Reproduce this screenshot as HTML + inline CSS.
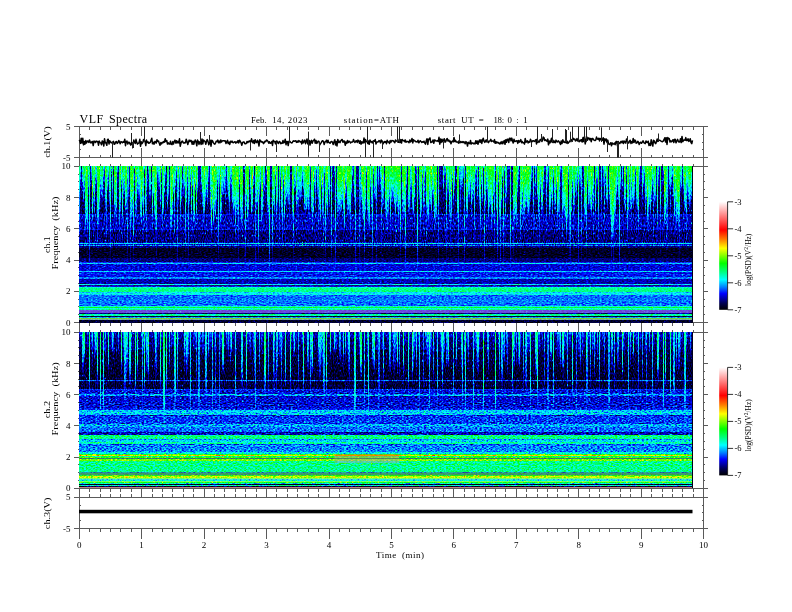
<!DOCTYPE html>
<html><head><meta charset="utf-8"><title>VLF Spectra</title>
<style>html,body{margin:0;padding:0;background:#fff;width:792px;height:612px;overflow:hidden;position:relative}
svg text{font-family:"Liberation Serif",serif}</style></head>
<body>
<svg width="792" height="612" viewBox="0 0 792 612" style="position:absolute;left:0;top:0"><defs><linearGradient id="cb" x1="0" y1="0" x2="0" y2="1"><stop offset="0.000" stop-color="#ffffff"/><stop offset="0.130" stop-color="#ff8080"/><stop offset="0.260" stop-color="#ff0000"/><stop offset="0.350" stop-color="#ff8000"/><stop offset="0.430" stop-color="#ffff00"/><stop offset="0.570" stop-color="#00ff00"/><stop offset="0.650" stop-color="#00ff80"/><stop offset="0.720" stop-color="#00ffff"/><stop offset="0.790" stop-color="#0080ff"/><stop offset="0.850" stop-color="#0000ff"/><stop offset="0.940" stop-color="#000050"/><stop offset="1.000" stop-color="#000000"/></linearGradient></defs><path d="M74.4 126.5L708.4 126.5M74.4 157.6L708.4 157.6M79.2 126.5L79.2 157.6M703.6 126.5L703.6 157.6M74.4 166.3L708.4 166.3M74.4 322.5L708.4 322.5M79.2 166.3L79.2 322.5M703.6 166.3L703.6 322.5M74.4 332.2L708.4 332.2M74.4 488.2L708.4 488.2M79.2 332.2L79.2 488.2M703.6 332.2L703.6 488.2M74.4 497.3L708.4 497.3M74.4 528.5L708.4 528.5M79.2 497.3L79.2 528.5M703.6 497.3L703.6 528.5M79.2 126.5L79.2 528.5M703.6 126.5L703.6 528.5M89.6 126.5L89.6 129.5M89.6 154.6L89.6 157.6M89.6 163.7L89.6 166.3M89.6 322.5L89.6 326M89.6 329.6L89.6 332.2M89.6 488.2L89.6 491.7M89.6 494.4L89.6 497.3M89.6 528.5L89.6 531.5M100 126.5L100 129.5M100 154.6L100 157.6M100 163.7L100 166.3M100 322.5L100 326M100 329.6L100 332.2M100 488.2L100 491.7M100 494.4L100 497.3M100 528.5L100 531.5M110.4 126.5L110.4 129.5M110.4 154.6L110.4 157.6M110.4 163.7L110.4 166.3M110.4 322.5L110.4 326M110.4 329.6L110.4 332.2M110.4 488.2L110.4 491.7M110.4 494.4L110.4 497.3M110.4 528.5L110.4 531.5M120.8 126.5L120.8 129.5M120.8 154.6L120.8 157.6M120.8 163.7L120.8 166.3M120.8 322.5L120.8 326M120.8 329.6L120.8 332.2M120.8 488.2L120.8 491.7M120.8 494.4L120.8 497.3M120.8 528.5L120.8 531.5M131.2 126.5L131.2 129.5M131.2 154.6L131.2 157.6M131.2 163.7L131.2 166.3M131.2 322.5L131.2 326M131.2 329.6L131.2 332.2M131.2 488.2L131.2 491.7M131.2 494.4L131.2 497.3M131.2 528.5L131.2 531.5M141.6 126.5L141.6 136M141.6 147.6L141.6 166.3M141.6 322.5L141.6 332.2M141.6 488.2L141.6 497.3M141.6 528.5L141.6 538.8M152 126.5L152 129.5M152 154.6L152 157.6M152 163.7L152 166.3M152 322.5L152 326M152 329.6L152 332.2M152 488.2L152 491.7M152 494.4L152 497.3M152 528.5L152 531.5M162.5 126.5L162.5 129.5M162.5 154.6L162.5 157.6M162.5 163.7L162.5 166.3M162.5 322.5L162.5 326M162.5 329.6L162.5 332.2M162.5 488.2L162.5 491.7M162.5 494.4L162.5 497.3M162.5 528.5L162.5 531.5M172.9 126.5L172.9 129.5M172.9 154.6L172.9 157.6M172.9 163.7L172.9 166.3M172.9 322.5L172.9 326M172.9 329.6L172.9 332.2M172.9 488.2L172.9 491.7M172.9 494.4L172.9 497.3M172.9 528.5L172.9 531.5M183.3 126.5L183.3 129.5M183.3 154.6L183.3 157.6M183.3 163.7L183.3 166.3M183.3 322.5L183.3 326M183.3 329.6L183.3 332.2M183.3 488.2L183.3 491.7M183.3 494.4L183.3 497.3M183.3 528.5L183.3 531.5M193.7 126.5L193.7 129.5M193.7 154.6L193.7 157.6M193.7 163.7L193.7 166.3M193.7 322.5L193.7 326M193.7 329.6L193.7 332.2M193.7 488.2L193.7 491.7M193.7 494.4L193.7 497.3M193.7 528.5L193.7 531.5M204.1 126.5L204.1 136M204.1 147.6L204.1 166.3M204.1 322.5L204.1 332.2M204.1 488.2L204.1 497.3M204.1 528.5L204.1 538.8M214.5 126.5L214.5 129.5M214.5 154.6L214.5 157.6M214.5 163.7L214.5 166.3M214.5 322.5L214.5 326M214.5 329.6L214.5 332.2M214.5 488.2L214.5 491.7M214.5 494.4L214.5 497.3M214.5 528.5L214.5 531.5M224.9 126.5L224.9 129.5M224.9 154.6L224.9 157.6M224.9 163.7L224.9 166.3M224.9 322.5L224.9 326M224.9 329.6L224.9 332.2M224.9 488.2L224.9 491.7M224.9 494.4L224.9 497.3M224.9 528.5L224.9 531.5M235.3 126.5L235.3 129.5M235.3 154.6L235.3 157.6M235.3 163.7L235.3 166.3M235.3 322.5L235.3 326M235.3 329.6L235.3 332.2M235.3 488.2L235.3 491.7M235.3 494.4L235.3 497.3M235.3 528.5L235.3 531.5M245.7 126.5L245.7 129.5M245.7 154.6L245.7 157.6M245.7 163.7L245.7 166.3M245.7 322.5L245.7 326M245.7 329.6L245.7 332.2M245.7 488.2L245.7 491.7M245.7 494.4L245.7 497.3M245.7 528.5L245.7 531.5M256.1 126.5L256.1 129.5M256.1 154.6L256.1 157.6M256.1 163.7L256.1 166.3M256.1 322.5L256.1 326M256.1 329.6L256.1 332.2M256.1 488.2L256.1 491.7M256.1 494.4L256.1 497.3M256.1 528.5L256.1 531.5M266.5 126.5L266.5 136M266.5 147.6L266.5 166.3M266.5 322.5L266.5 332.2M266.5 488.2L266.5 497.3M266.5 528.5L266.5 538.8M276.9 126.5L276.9 129.5M276.9 154.6L276.9 157.6M276.9 163.7L276.9 166.3M276.9 322.5L276.9 326M276.9 329.6L276.9 332.2M276.9 488.2L276.9 491.7M276.9 494.4L276.9 497.3M276.9 528.5L276.9 531.5M287.3 126.5L287.3 129.5M287.3 154.6L287.3 157.6M287.3 163.7L287.3 166.3M287.3 322.5L287.3 326M287.3 329.6L287.3 332.2M287.3 488.2L287.3 491.7M287.3 494.4L287.3 497.3M287.3 528.5L287.3 531.5M297.7 126.5L297.7 129.5M297.7 154.6L297.7 157.6M297.7 163.7L297.7 166.3M297.7 322.5L297.7 326M297.7 329.6L297.7 332.2M297.7 488.2L297.7 491.7M297.7 494.4L297.7 497.3M297.7 528.5L297.7 531.5M308.1 126.5L308.1 129.5M308.1 154.6L308.1 157.6M308.1 163.7L308.1 166.3M308.1 322.5L308.1 326M308.1 329.6L308.1 332.2M308.1 488.2L308.1 491.7M308.1 494.4L308.1 497.3M308.1 528.5L308.1 531.5M318.6 126.5L318.6 129.5M318.6 154.6L318.6 157.6M318.6 163.7L318.6 166.3M318.6 322.5L318.6 326M318.6 329.6L318.6 332.2M318.6 488.2L318.6 491.7M318.6 494.4L318.6 497.3M318.6 528.5L318.6 531.5M329 126.5L329 136M329 147.6L329 166.3M329 322.5L329 332.2M329 488.2L329 497.3M329 528.5L329 538.8M339.4 126.5L339.4 129.5M339.4 154.6L339.4 157.6M339.4 163.7L339.4 166.3M339.4 322.5L339.4 326M339.4 329.6L339.4 332.2M339.4 488.2L339.4 491.7M339.4 494.4L339.4 497.3M339.4 528.5L339.4 531.5M349.8 126.5L349.8 129.5M349.8 154.6L349.8 157.6M349.8 163.7L349.8 166.3M349.8 322.5L349.8 326M349.8 329.6L349.8 332.2M349.8 488.2L349.8 491.7M349.8 494.4L349.8 497.3M349.8 528.5L349.8 531.5M360.2 126.5L360.2 129.5M360.2 154.6L360.2 157.6M360.2 163.7L360.2 166.3M360.2 322.5L360.2 326M360.2 329.6L360.2 332.2M360.2 488.2L360.2 491.7M360.2 494.4L360.2 497.3M360.2 528.5L360.2 531.5M370.6 126.5L370.6 129.5M370.6 154.6L370.6 157.6M370.6 163.7L370.6 166.3M370.6 322.5L370.6 326M370.6 329.6L370.6 332.2M370.6 488.2L370.6 491.7M370.6 494.4L370.6 497.3M370.6 528.5L370.6 531.5M381 126.5L381 129.5M381 154.6L381 157.6M381 163.7L381 166.3M381 322.5L381 326M381 329.6L381 332.2M381 488.2L381 491.7M381 494.4L381 497.3M381 528.5L381 531.5M391.4 126.5L391.4 136M391.4 147.6L391.4 166.3M391.4 322.5L391.4 332.2M391.4 488.2L391.4 497.3M391.4 528.5L391.4 538.8M401.8 126.5L401.8 129.5M401.8 154.6L401.8 157.6M401.8 163.7L401.8 166.3M401.8 322.5L401.8 326M401.8 329.6L401.8 332.2M401.8 488.2L401.8 491.7M401.8 494.4L401.8 497.3M401.8 528.5L401.8 531.5M412.2 126.5L412.2 129.5M412.2 154.6L412.2 157.6M412.2 163.7L412.2 166.3M412.2 322.5L412.2 326M412.2 329.6L412.2 332.2M412.2 488.2L412.2 491.7M412.2 494.4L412.2 497.3M412.2 528.5L412.2 531.5M422.6 126.5L422.6 129.5M422.6 154.6L422.6 157.6M422.6 163.7L422.6 166.3M422.6 322.5L422.6 326M422.6 329.6L422.6 332.2M422.6 488.2L422.6 491.7M422.6 494.4L422.6 497.3M422.6 528.5L422.6 531.5M433 126.5L433 129.5M433 154.6L433 157.6M433 163.7L433 166.3M433 322.5L433 326M433 329.6L433 332.2M433 488.2L433 491.7M433 494.4L433 497.3M433 528.5L433 531.5M443.4 126.5L443.4 129.5M443.4 154.6L443.4 157.6M443.4 163.7L443.4 166.3M443.4 322.5L443.4 326M443.4 329.6L443.4 332.2M443.4 488.2L443.4 491.7M443.4 494.4L443.4 497.3M443.4 528.5L443.4 531.5M453.8 126.5L453.8 136M453.8 147.6L453.8 166.3M453.8 322.5L453.8 332.2M453.8 488.2L453.8 497.3M453.8 528.5L453.8 538.8M464.2 126.5L464.2 129.5M464.2 154.6L464.2 157.6M464.2 163.7L464.2 166.3M464.2 322.5L464.2 326M464.2 329.6L464.2 332.2M464.2 488.2L464.2 491.7M464.2 494.4L464.2 497.3M464.2 528.5L464.2 531.5M474.7 126.5L474.7 129.5M474.7 154.6L474.7 157.6M474.7 163.7L474.7 166.3M474.7 322.5L474.7 326M474.7 329.6L474.7 332.2M474.7 488.2L474.7 491.7M474.7 494.4L474.7 497.3M474.7 528.5L474.7 531.5M485.1 126.5L485.1 129.5M485.1 154.6L485.1 157.6M485.1 163.7L485.1 166.3M485.1 322.5L485.1 326M485.1 329.6L485.1 332.2M485.1 488.2L485.1 491.7M485.1 494.4L485.1 497.3M485.1 528.5L485.1 531.5M495.5 126.5L495.5 129.5M495.5 154.6L495.5 157.6M495.5 163.7L495.5 166.3M495.5 322.5L495.5 326M495.5 329.6L495.5 332.2M495.5 488.2L495.5 491.7M495.5 494.4L495.5 497.3M495.5 528.5L495.5 531.5M505.9 126.5L505.9 129.5M505.9 154.6L505.9 157.6M505.9 163.7L505.9 166.3M505.9 322.5L505.9 326M505.9 329.6L505.9 332.2M505.9 488.2L505.9 491.7M505.9 494.4L505.9 497.3M505.9 528.5L505.9 531.5M516.3 126.5L516.3 136M516.3 147.6L516.3 166.3M516.3 322.5L516.3 332.2M516.3 488.2L516.3 497.3M516.3 528.5L516.3 538.8M526.7 126.5L526.7 129.5M526.7 154.6L526.7 157.6M526.7 163.7L526.7 166.3M526.7 322.5L526.7 326M526.7 329.6L526.7 332.2M526.7 488.2L526.7 491.7M526.7 494.4L526.7 497.3M526.7 528.5L526.7 531.5M537.1 126.5L537.1 129.5M537.1 154.6L537.1 157.6M537.1 163.7L537.1 166.3M537.1 322.5L537.1 326M537.1 329.6L537.1 332.2M537.1 488.2L537.1 491.7M537.1 494.4L537.1 497.3M537.1 528.5L537.1 531.5M547.5 126.5L547.5 129.5M547.5 154.6L547.5 157.6M547.5 163.7L547.5 166.3M547.5 322.5L547.5 326M547.5 329.6L547.5 332.2M547.5 488.2L547.5 491.7M547.5 494.4L547.5 497.3M547.5 528.5L547.5 531.5M557.9 126.5L557.9 129.5M557.9 154.6L557.9 157.6M557.9 163.7L557.9 166.3M557.9 322.5L557.9 326M557.9 329.6L557.9 332.2M557.9 488.2L557.9 491.7M557.9 494.4L557.9 497.3M557.9 528.5L557.9 531.5M568.3 126.5L568.3 129.5M568.3 154.6L568.3 157.6M568.3 163.7L568.3 166.3M568.3 322.5L568.3 326M568.3 329.6L568.3 332.2M568.3 488.2L568.3 491.7M568.3 494.4L568.3 497.3M568.3 528.5L568.3 531.5M578.7 126.5L578.7 136M578.7 147.6L578.7 166.3M578.7 322.5L578.7 332.2M578.7 488.2L578.7 497.3M578.7 528.5L578.7 538.8M589.1 126.5L589.1 129.5M589.1 154.6L589.1 157.6M589.1 163.7L589.1 166.3M589.1 322.5L589.1 326M589.1 329.6L589.1 332.2M589.1 488.2L589.1 491.7M589.1 494.4L589.1 497.3M589.1 528.5L589.1 531.5M599.5 126.5L599.5 129.5M599.5 154.6L599.5 157.6M599.5 163.7L599.5 166.3M599.5 322.5L599.5 326M599.5 329.6L599.5 332.2M599.5 488.2L599.5 491.7M599.5 494.4L599.5 497.3M599.5 528.5L599.5 531.5M609.9 126.5L609.9 129.5M609.9 154.6L609.9 157.6M609.9 163.7L609.9 166.3M609.9 322.5L609.9 326M609.9 329.6L609.9 332.2M609.9 488.2L609.9 491.7M609.9 494.4L609.9 497.3M609.9 528.5L609.9 531.5M620.3 126.5L620.3 129.5M620.3 154.6L620.3 157.6M620.3 163.7L620.3 166.3M620.3 322.5L620.3 326M620.3 329.6L620.3 332.2M620.3 488.2L620.3 491.7M620.3 494.4L620.3 497.3M620.3 528.5L620.3 531.5M630.8 126.5L630.8 129.5M630.8 154.6L630.8 157.6M630.8 163.7L630.8 166.3M630.8 322.5L630.8 326M630.8 329.6L630.8 332.2M630.8 488.2L630.8 491.7M630.8 494.4L630.8 497.3M630.8 528.5L630.8 531.5M641.2 126.5L641.2 136M641.2 147.6L641.2 166.3M641.2 322.5L641.2 332.2M641.2 488.2L641.2 497.3M641.2 528.5L641.2 538.8M651.6 126.5L651.6 129.5M651.6 154.6L651.6 157.6M651.6 163.7L651.6 166.3M651.6 322.5L651.6 326M651.6 329.6L651.6 332.2M651.6 488.2L651.6 491.7M651.6 494.4L651.6 497.3M651.6 528.5L651.6 531.5M662 126.5L662 129.5M662 154.6L662 157.6M662 163.7L662 166.3M662 322.5L662 326M662 329.6L662 332.2M662 488.2L662 491.7M662 494.4L662 497.3M662 528.5L662 531.5M672.4 126.5L672.4 129.5M672.4 154.6L672.4 157.6M672.4 163.7L672.4 166.3M672.4 322.5L672.4 326M672.4 329.6L672.4 332.2M672.4 488.2L672.4 491.7M672.4 494.4L672.4 497.3M672.4 528.5L672.4 531.5M682.8 126.5L682.8 129.5M682.8 154.6L682.8 157.6M682.8 163.7L682.8 166.3M682.8 322.5L682.8 326M682.8 329.6L682.8 332.2M682.8 488.2L682.8 491.7M682.8 494.4L682.8 497.3M682.8 528.5L682.8 531.5M693.2 126.5L693.2 129.5M693.2 154.6L693.2 157.6M693.2 163.7L693.2 166.3M693.2 322.5L693.2 326M693.2 329.6L693.2 332.2M693.2 488.2L693.2 491.7M693.2 494.4L693.2 497.3M693.2 528.5L693.2 531.5M79.2 528.5L79.2 538.8M703.6 528.5L703.6 538.8M79.2 134.3L81.2 134.3M701.6 134.3L703.6 134.3M79.2 142.1L81.2 142.1M701.6 142.1L703.6 142.1M79.2 149.8L81.2 149.8M701.6 149.8L703.6 149.8M79.2 505.1L81.2 505.1M701.6 505.1L703.6 505.1M79.2 512.9L81.2 512.9M701.6 512.9L703.6 512.9M79.2 520.7L81.2 520.7M701.6 520.7L703.6 520.7M78.2 174.1L79.2 174.1M703.6 174.1L705.2 174.1M78.2 181.9L79.2 181.9M703.6 181.9L705.2 181.9M78.2 189.7L79.2 189.7M703.6 189.7L705.2 189.7M74.4 197.5L79.2 197.5M703.6 197.5L708.4 197.5M78.2 205.4L79.2 205.4M703.6 205.4L705.2 205.4M78.2 213.2L79.2 213.2M703.6 213.2L705.2 213.2M78.2 221L79.2 221M703.6 221L705.2 221M74.4 228.8L79.2 228.8M703.6 228.8L708.4 228.8M78.2 236.6L79.2 236.6M703.6 236.6L705.2 236.6M78.2 244.4L79.2 244.4M703.6 244.4L705.2 244.4M78.2 252.2L79.2 252.2M703.6 252.2L705.2 252.2M74.4 260L79.2 260M703.6 260L708.4 260M78.2 267.8L79.2 267.8M703.6 267.8L705.2 267.8M78.2 275.6L79.2 275.6M703.6 275.6L705.2 275.6M78.2 283.5L79.2 283.5M703.6 283.5L705.2 283.5M74.4 291.3L79.2 291.3M703.6 291.3L708.4 291.3M78.2 299.1L79.2 299.1M703.6 299.1L705.2 299.1M78.2 306.9L79.2 306.9M703.6 306.9L705.2 306.9M78.2 314.7L79.2 314.7M703.6 314.7L705.2 314.7M78.2 340L79.2 340M703.6 340L705.2 340M78.2 347.8L79.2 347.8M703.6 347.8L705.2 347.8M78.2 355.6L79.2 355.6M703.6 355.6L705.2 355.6M74.4 363.4L79.2 363.4M703.6 363.4L708.4 363.4M78.2 371.2L79.2 371.2M703.6 371.2L705.2 371.2M78.2 379L79.2 379M703.6 379L705.2 379M78.2 386.8L79.2 386.8M703.6 386.8L705.2 386.8M74.4 394.6L79.2 394.6M703.6 394.6L708.4 394.6M78.2 402.4L79.2 402.4M703.6 402.4L705.2 402.4M78.2 410.2L79.2 410.2M703.6 410.2L705.2 410.2M78.2 418L79.2 418M703.6 418L705.2 418M74.4 425.8L79.2 425.8M703.6 425.8L708.4 425.8M78.2 433.6L79.2 433.6M703.6 433.6L705.2 433.6M78.2 441.4L79.2 441.4M703.6 441.4L705.2 441.4M78.2 449.2L79.2 449.2M703.6 449.2L705.2 449.2M74.4 457L79.2 457M703.6 457L708.4 457M78.2 464.8L79.2 464.8M703.6 464.8L705.2 464.8M78.2 472.6L79.2 472.6M703.6 472.6L705.2 472.6M78.2 480.4L79.2 480.4M703.6 480.4L705.2 480.4" stroke="#5a5a5a" stroke-width="1" fill="none" shape-rendering="crispEdges"/><defs><filter id="cmA" x="0" y="0" width="1" height="1" color-interpolation-filters="sRGB"><feTurbulence type="fractalNoise" baseFrequency="0.9 0.4" numOctaves="1" seed="3" result="t"/><feColorMatrix in="t" values="1 0 0 0 0 1 0 0 0 0 1 0 0 0 0 0 0 0 0 1" result="g"/><feComposite in="SourceGraphic" in2="g" operator="arithmetic" k1="0" k2="1" k3="0.35" k4="-0.1750" result="s"/><feTurbulence type="fractalNoise" baseFrequency="0.8 0.4" numOctaves="1" seed="53" result="t2"/><feColorMatrix in="t2" values="10 0 0 0 -6.60 10 0 0 0 -6.60 10 0 0 0 -6.60 0 0 0 0 1" result="g2"/><feComposite in="s" in2="g2" operator="arithmetic" k1="0" k2="1" k3="0.13" k4="0" result="s2"/><feComponentTransfer in="s2"><feFuncR type="table" tableValues="0 0 0 0 0 0 0 0 0 0 0 0 0 0 0 0 0 0 0 0 0 0 0 0 0 0 0 0 0.103 0.217 0.33 0.443 0.557 0.67 0.783 0.897 1 1 1 1 1 1 1 1 1 1 1 1 1 1 1 1 1 1 1 1 1 1 1 1 1 1 1 1"/><feFuncG type="table" tableValues="0 0 0 0 0 0 0 0 0 0 0.073 0.206 0.339 0.471 0.589 0.702 0.815 0.928 1 1 1 1 1 1 1 1 1 1 1 1 1 1 1 1 1 1 0.991 0.892 0.793 0.695 0.596 0.498 0.409 0.32 0.232 0.143 0.0549 0.0233 0.0846 0.146 0.207 0.268 0.33 0.391 0.452 0.514 0.574 0.635 0.696 0.757 0.818 0.878 0.939 1"/><feFuncB type="table" tableValues="0 0.083 0.166 0.249 0.34 0.461 0.582 0.703 0.824 0.946 1 1 1 1 1 1 1 1 0.959 0.846 0.733 0.621 0.508 0.407 0.308 0.208 0.109 0.00896 0 0 0 0 0 0 0 0 0 0 0 0 0 0 0 0 0 0 0 0.0233 0.0846 0.146 0.207 0.268 0.33 0.391 0.452 0.514 0.574 0.635 0.696 0.757 0.818 0.878 0.939 1"/><feFuncA type="identity"/></feComponentTransfer><feGaussianBlur stdDeviation="0.4"/></filter><filter id="cmA2" x="0" y="0" width="1" height="1" color-interpolation-filters="sRGB"><feTurbulence type="fractalNoise" baseFrequency="0.45 0.9" numOctaves="1" seed="4" result="t"/><feColorMatrix in="t" values="1 0 0 0 0 1 0 0 0 0 1 0 0 0 0 0 0 0 0 1" result="g"/><feComposite in="SourceGraphic" in2="g" operator="arithmetic" k1="0" k2="1" k3="0.24" k4="-0.1200" result="s"/><feTurbulence type="fractalNoise" baseFrequency="0.5 0.9" numOctaves="1" seed="54" result="t2"/><feColorMatrix in="t2" values="10 0 0 0 -6.60 10 0 0 0 -6.60 10 0 0 0 -6.60 0 0 0 0 1" result="g2"/><feComposite in="s" in2="g2" operator="arithmetic" k1="0" k2="1" k3="0.07" k4="0" result="s2"/><feComponentTransfer in="s2"><feFuncR type="table" tableValues="0 0 0 0 0 0 0 0 0 0 0 0 0 0 0 0 0 0 0 0 0 0 0 0 0 0 0 0 0.103 0.217 0.33 0.443 0.557 0.67 0.783 0.897 1 1 1 1 1 1 1 1 1 1 1 1 1 1 1 1 1 1 1 1 1 1 1 1 1 1 1 1"/><feFuncG type="table" tableValues="0 0 0 0 0 0 0 0 0 0 0.073 0.206 0.339 0.471 0.589 0.702 0.815 0.928 1 1 1 1 1 1 1 1 1 1 1 1 1 1 1 1 1 1 0.991 0.892 0.793 0.695 0.596 0.498 0.409 0.32 0.232 0.143 0.0549 0.0233 0.0846 0.146 0.207 0.268 0.33 0.391 0.452 0.514 0.574 0.635 0.696 0.757 0.818 0.878 0.939 1"/><feFuncB type="table" tableValues="0 0.083 0.166 0.249 0.34 0.461 0.582 0.703 0.824 0.946 1 1 1 1 1 1 1 1 0.959 0.846 0.733 0.621 0.508 0.407 0.308 0.208 0.109 0.00896 0 0 0 0 0 0 0 0 0 0 0 0 0 0 0 0 0 0 0 0.0233 0.0846 0.146 0.207 0.268 0.33 0.391 0.452 0.514 0.574 0.635 0.696 0.757 0.818 0.878 0.939 1"/><feFuncA type="identity"/></feComponentTransfer><feGaussianBlur stdDeviation="0.4"/></filter><filter id="cmB" x="0" y="0" width="1" height="1" color-interpolation-filters="sRGB"><feTurbulence type="fractalNoise" baseFrequency="0.9 0.4" numOctaves="1" seed="8" result="t"/><feColorMatrix in="t" values="1 0 0 0 0 1 0 0 0 0 1 0 0 0 0 0 0 0 0 1" result="g"/><feComposite in="SourceGraphic" in2="g" operator="arithmetic" k1="0" k2="1" k3="0.3" k4="-0.1500" result="s"/><feTurbulence type="fractalNoise" baseFrequency="0.8 0.4" numOctaves="1" seed="58" result="t2"/><feColorMatrix in="t2" values="10 0 0 0 -6.60 10 0 0 0 -6.60 10 0 0 0 -6.60 0 0 0 0 1" result="g2"/><feComposite in="s" in2="g2" operator="arithmetic" k1="0" k2="1" k3="0.13" k4="0" result="s2"/><feComponentTransfer in="s2"><feFuncR type="table" tableValues="0 0 0 0 0 0 0 0 0 0 0 0 0 0 0 0 0 0 0 0 0 0 0 0 0 0 0 0 0.103 0.217 0.33 0.443 0.557 0.67 0.783 0.897 1 1 1 1 1 1 1 1 1 1 1 1 1 1 1 1 1 1 1 1 1 1 1 1 1 1 1 1"/><feFuncG type="table" tableValues="0 0 0 0 0 0 0 0 0 0 0.073 0.206 0.339 0.471 0.589 0.702 0.815 0.928 1 1 1 1 1 1 1 1 1 1 1 1 1 1 1 1 1 1 0.991 0.892 0.793 0.695 0.596 0.498 0.409 0.32 0.232 0.143 0.0549 0.0233 0.0846 0.146 0.207 0.268 0.33 0.391 0.452 0.514 0.574 0.635 0.696 0.757 0.818 0.878 0.939 1"/><feFuncB type="table" tableValues="0 0.083 0.166 0.249 0.34 0.461 0.582 0.703 0.824 0.946 1 1 1 1 1 1 1 1 0.959 0.846 0.733 0.621 0.508 0.407 0.308 0.208 0.109 0.00896 0 0 0 0 0 0 0 0 0 0 0 0 0 0 0 0 0 0 0 0.0233 0.0846 0.146 0.207 0.268 0.33 0.391 0.452 0.514 0.574 0.635 0.696 0.757 0.818 0.878 0.939 1"/><feFuncA type="identity"/></feComponentTransfer><feGaussianBlur stdDeviation="0.4"/></filter><filter id="cmB2" x="0" y="0" width="1" height="1" color-interpolation-filters="sRGB"><feTurbulence type="fractalNoise" baseFrequency="0.45 0.9" numOctaves="1" seed="9" result="t"/><feColorMatrix in="t" values="1 0 0 0 0 1 0 0 0 0 1 0 0 0 0 0 0 0 0 1" result="g"/><feComposite in="SourceGraphic" in2="g" operator="arithmetic" k1="0" k2="1" k3="0.38" k4="-0.1900" result="s"/><feTurbulence type="fractalNoise" baseFrequency="0.5 0.9" numOctaves="1" seed="59" result="t2"/><feColorMatrix in="t2" values="10 0 0 0 -6.60 10 0 0 0 -6.60 10 0 0 0 -6.60 0 0 0 0 1" result="g2"/><feComposite in="s" in2="g2" operator="arithmetic" k1="0" k2="1" k3="0.1" k4="0" result="s2"/><feComponentTransfer in="s2"><feFuncR type="table" tableValues="0 0 0 0 0 0 0 0 0 0 0 0 0 0 0 0 0 0 0 0 0 0 0 0 0 0 0 0 0.103 0.217 0.33 0.443 0.557 0.67 0.783 0.897 1 1 1 1 1 1 1 1 1 1 1 1 1 1 1 1 1 1 1 1 1 1 1 1 1 1 1 1"/><feFuncG type="table" tableValues="0 0 0 0 0 0 0 0 0 0 0.073 0.206 0.339 0.471 0.589 0.702 0.815 0.928 1 1 1 1 1 1 1 1 1 1 1 1 1 1 1 1 1 1 0.991 0.892 0.793 0.695 0.596 0.498 0.409 0.32 0.232 0.143 0.0549 0.0233 0.0846 0.146 0.207 0.268 0.33 0.391 0.452 0.514 0.574 0.635 0.696 0.757 0.818 0.878 0.939 1"/><feFuncB type="table" tableValues="0 0.083 0.166 0.249 0.34 0.461 0.582 0.703 0.824 0.946 1 1 1 1 1 1 1 1 0.959 0.846 0.733 0.621 0.508 0.407 0.308 0.208 0.109 0.00896 0 0 0 0 0 0 0 0 0 0 0 0 0 0 0 0 0 0 0 0.0233 0.0846 0.146 0.207 0.268 0.33 0.391 0.452 0.514 0.574 0.635 0.696 0.757 0.818 0.878 0.939 1"/><feFuncA type="identity"/></feComponentTransfer><feGaussianBlur stdDeviation="0.4"/></filter><clipPath id="c1"><rect x="79.0" y="166" width="614" height="157"/></clipPath><clipPath id="c1u"><rect x="79.0" y="166" width="614" height="80"/></clipPath><clipPath id="c1l"><rect x="79.0" y="246" width="614" height="77"/></clipPath><clipPath id="c2"><rect x="79.0" y="332" width="614" height="156"/></clipPath><clipPath id="c2u"><rect x="79.0" y="332" width="614" height="58"/></clipPath><clipPath id="c2l"><rect x="79.0" y="390" width="614" height="98"/></clipPath><linearGradient id="k1" gradientUnits="userSpaceOnUse" x1="0" y1="-40" x2="0" y2="0"><stop offset="0" stop-color="#707070"/><stop offset="0.8" stop-color="#303030"/><stop offset="1" stop-color="#1a1a1a" stop-opacity="0"/></linearGradient><rect id="q1" x="0" y="-200" width="1" height="200" fill="url(#k1)"/><linearGradient id="k2" gradientUnits="userSpaceOnUse" x1="0" y1="-36" x2="0" y2="0"><stop offset="0" stop-color="#444"/><stop offset="0.8" stop-color="#1e1e1e"/><stop offset="1" stop-color="#0e0e0e" stop-opacity="0"/></linearGradient><rect id="q2" x="0" y="-200" width="1" height="200" fill="url(#k2)"/><linearGradient id="ks" x1="0" y1="0" x2="0" y2="1"><stop offset="0" stop-color="#646464"/><stop offset="0.5" stop-color="#4a4a4a"/><stop offset="1" stop-color="#333" stop-opacity="0"/></linearGradient><linearGradient id="ks2" x1="0" y1="0" x2="0" y2="1"><stop offset="0" stop-color="#5e5e5e"/><stop offset="0.6" stop-color="#4a4a4a"/><stop offset="1" stop-color="#333" stop-opacity="0"/></linearGradient></defs><g clip-path="url(#c1u)"><g filter="url(#cmA)"><rect x="77.0" y="160" width="617.5" height="26" fill="#1a1a1a"/><rect x="77.0" y="186" width="617.5" height="14" fill="#131313"/><rect x="77.0" y="200" width="617.5" height="14" fill="#0f0f0f"/><rect x="77.0" y="214" width="617.5" height="1" fill="#262626"/><rect x="77.0" y="215" width="617.5" height="14" fill="#1d1d1d"/><rect x="77.0" y="229" width="617.5" height="1.5" fill="#262626"/><rect x="77.0" y="230.5" width="617.5" height="11.5" fill="#131313"/><rect x="77.0" y="242" width="617.5" height="1" fill="#1c1c1c"/><rect x="77.0" y="243" width="617.5" height="1" fill="#424242"/><rect x="77.0" y="244" width="617.5" height="1" fill="#1f1f1f"/><rect x="77.0" y="245" width="617.5" height="1" fill="#333333"/><rect x="77.0" y="246" width="617.5" height="2" fill="#141414"/><use href="#q1" x="79" y="191.4"/><use href="#q1" x="80" y="189.6"/><use href="#q1" x="81" y="170.5"/><use href="#q1" x="82" y="187.4"/><use href="#q1" x="83" y="205.2"/><use href="#q1" x="84" y="199"/><use href="#q1" x="85" y="200.7"/><use href="#q1" x="86" y="228.4"/><use href="#q1" x="87" y="235.2"/><use href="#q1" x="88" y="194"/><use href="#q1" x="89" y="192.1"/><use href="#q1" x="90" y="166"/><use href="#q1" x="91" y="183.7"/><use href="#q1" x="92" y="230.4"/><use href="#q1" x="93" y="196"/><use href="#q1" x="94" y="216.9"/><use href="#q1" x="95" y="189.9"/><use href="#q1" x="96" y="189.2"/><use href="#q1" x="97" y="217.3"/><use href="#q1" x="98" y="230.4"/><use href="#q1" x="99" y="215.7"/><use href="#q1" x="100" y="185"/><use href="#q1" x="101" y="202.5"/><use href="#q1" x="102" y="204.2"/><use href="#q1" x="103" y="187.9"/><use href="#q1" x="104" y="181.4"/><use href="#q1" x="105" y="213.9"/><use href="#q1" x="106" y="197.6"/><use href="#q1" x="107" y="195.8"/><use href="#q1" x="108" y="186.8"/><use href="#q1" x="109" y="208.9"/><use href="#q1" x="110" y="173.7"/><use href="#q1" x="111" y="176"/><use href="#q1" x="112" y="203.2"/><use href="#q1" x="113" y="172.6"/><use href="#q1" x="114" y="218.3"/><use href="#q1" x="115" y="221.4"/><use href="#q1" x="116" y="193.1"/><use href="#q1" x="117" y="179.1"/><use href="#q1" x="118" y="166"/><use href="#q1" x="119" y="193.6"/><use href="#q1" x="120" y="216.9"/><use href="#q1" x="121" y="191.6"/><use href="#q1" x="122" y="191.1"/><use href="#q1" x="123" y="201.2"/><use href="#q1" x="124" y="198.9"/><use href="#q1" x="125" y="216.3"/><use href="#q1" x="126" y="215.7"/><use href="#q1" x="127" y="173.3"/><use href="#q1" x="128" y="201.4"/><use href="#q1" x="129" y="173.7"/><use href="#q1" x="130" y="211.5"/><use href="#q1" x="131" y="226.6"/><use href="#q1" x="132" y="218.9"/><use href="#q1" x="133" y="175.5"/><use href="#q1" x="134" y="177.1"/><use href="#q1" x="135" y="222.9"/><use href="#q1" x="136" y="190.8"/><use href="#q1" x="137" y="196.2"/><use href="#q1" x="138" y="166"/><use href="#q1" x="139" y="202.9"/><use href="#q1" x="140" y="225.4"/><use href="#q1" x="141" y="229.5"/><use href="#q1" x="142" y="211.1"/><use href="#q1" x="143" y="166"/><use href="#q1" x="144" y="176.5"/><use href="#q1" x="145" y="222.2"/><use href="#q1" x="146" y="189.6"/><use href="#q1" x="147" y="166"/><use href="#q1" x="148" y="180.7"/><use href="#q1" x="149" y="203.4"/><use href="#q1" x="150" y="203.1"/><use href="#q1" x="151" y="172.9"/><use href="#q1" x="152" y="173.5"/><use href="#q1" x="153" y="205.7"/><use href="#q1" x="154" y="223.2"/><use href="#q1" x="155" y="231.7"/><use href="#q1" x="156" y="224.4"/><use href="#q1" x="157" y="180.7"/><use href="#q1" x="158" y="190.1"/><use href="#q1" x="159" y="194"/><use href="#q1" x="160" y="212.7"/><use href="#q1" x="161" y="181.3"/><use href="#q1" x="162" y="222.9"/><use href="#q1" x="163" y="219.4"/><use href="#q1" x="164" y="199.3"/><use href="#q1" x="165" y="183.6"/><use href="#q1" x="166" y="166"/><use href="#q1" x="167" y="211.1"/><use href="#q1" x="168" y="202.5"/><use href="#q1" x="169" y="171.6"/><use href="#q1" x="170" y="200.7"/><use href="#q1" x="171" y="235.2"/><use href="#q1" x="172" y="222.2"/><use href="#q1" x="173" y="200.3"/><use href="#q1" x="174" y="205.7"/><use href="#q1" x="175" y="195.8"/><use href="#q1" x="176" y="177.8"/><use href="#q1" x="177" y="183.8"/><use href="#q1" x="178" y="207.8"/><use href="#q1" x="179" y="188.9"/><use href="#q1" x="180" y="172.4"/><use href="#q1" x="181" y="206"/><use href="#q1" x="182" y="175.8"/><use href="#q1" x="183" y="198"/><use href="#q1" x="184" y="167.1"/><use href="#q1" x="185" y="202"/><use href="#q1" x="186" y="209.5"/><use href="#q1" x="187" y="187.7"/><use href="#q1" x="188" y="190.5"/><use href="#q1" x="189" y="208.5"/><use href="#q1" x="190" y="189.9"/><use href="#q1" x="191" y="224.6"/><use href="#q1" x="192" y="192.7"/><use href="#q1" x="193" y="225.5"/><use href="#q1" x="194" y="228.6"/><use href="#q1" x="195" y="195.8"/><use href="#q1" x="196" y="224.5"/><use href="#q1" x="197" y="197.9"/><use href="#q1" x="198" y="166"/><use href="#q1" x="199" y="166"/><use href="#q1" x="200" y="166"/><use href="#q1" x="201" y="166"/><use href="#q1" x="202" y="210.2"/><use href="#q1" x="203" y="223.7"/><use href="#q1" x="204" y="217.2"/><use href="#q1" x="205" y="196.2"/><use href="#q1" x="206" y="201.2"/><use href="#q1" x="207" y="208.9"/><use href="#q1" x="208" y="184.4"/><use href="#q1" x="209" y="166"/><use href="#q1" x="210" y="173.7"/><use href="#q1" x="211" y="239.7"/><use href="#q1" x="212" y="215.5"/><use href="#q1" x="213" y="229.7"/><use href="#q1" x="214" y="223.5"/><use href="#q1" x="215" y="219.9"/><use href="#q1" x="216" y="206.5"/><use href="#q1" x="217" y="190.9"/><use href="#q1" x="218" y="172.8"/><use href="#q1" x="219" y="190.7"/><use href="#q1" x="220" y="229.7"/><use href="#q1" x="221" y="187.6"/><use href="#q1" x="222" y="201.1"/><use href="#q1" x="223" y="197.6"/><use href="#q1" x="224" y="195.3"/><use href="#q1" x="225" y="179.1"/><use href="#q1" x="226" y="169"/><use href="#q1" x="227" y="196"/><use href="#q1" x="228" y="206.4"/><use href="#q1" x="229" y="199"/><use href="#q1" x="230" y="191"/><use href="#q1" x="231" y="166"/><use href="#q1" x="232" y="212.6"/><use href="#q1" x="233" y="218.7"/><use href="#q1" x="234" y="221.1"/><use href="#q1" x="235" y="217"/><use href="#q1" x="236" y="216.2"/><use href="#q1" x="237" y="219.9"/><use href="#q1" x="238" y="220.7"/><use href="#q1" x="239" y="191.4"/><use href="#q1" x="240" y="222.2"/><use href="#q1" x="241" y="229.1"/><use href="#q1" x="242" y="220.9"/><use href="#q1" x="243" y="166"/><use href="#q1" x="244" y="166"/><use href="#q1" x="245" y="183.8"/><use href="#q1" x="246" y="212"/><use href="#q1" x="247" y="227.3"/><use href="#q1" x="248" y="217.5"/><use href="#q1" x="249" y="178.1"/><use href="#q1" x="250" y="200.9"/><use href="#q1" x="251" y="221.2"/><use href="#q1" x="252" y="218.1"/><use href="#q1" x="253" y="192.1"/><use href="#q1" x="254" y="170.8"/><use href="#q1" x="255" y="188.5"/><use href="#q1" x="256" y="216.1"/><use href="#q1" x="257" y="208.8"/><use href="#q1" x="258" y="201.9"/><use href="#q1" x="259" y="202.7"/><use href="#q1" x="260" y="191.3"/><use href="#q1" x="261" y="227.8"/><use href="#q1" x="262" y="221.9"/><use href="#q1" x="263" y="182.4"/><use href="#q1" x="264" y="198"/><use href="#q1" x="265" y="171.2"/><use href="#q1" x="266" y="182"/><use href="#q1" x="267" y="215.8"/><use href="#q1" x="268" y="222.9"/><use href="#q1" x="269" y="204.9"/><use href="#q1" x="270" y="166"/><use href="#q1" x="271" y="166"/><use href="#q1" x="272" y="205.1"/><use href="#q1" x="273" y="212.1"/><use href="#q1" x="274" y="217.3"/><use href="#q1" x="275" y="191.2"/><use href="#q1" x="276" y="223"/><use href="#q1" x="277" y="207.3"/><use href="#q1" x="278" y="169.2"/><use href="#q1" x="279" y="211.6"/><use href="#q1" x="280" y="187.6"/><use href="#q1" x="281" y="220.7"/><use href="#q1" x="282" y="191.9"/><use href="#q1" x="283" y="191.9"/><use href="#q1" x="284" y="225.8"/><use href="#q1" x="285" y="210.1"/><use href="#q1" x="286" y="199.5"/><use href="#q1" x="287" y="205.6"/><use href="#q1" x="288" y="209"/><use href="#q1" x="289" y="194.9"/><use href="#q1" x="290" y="166"/><use href="#q1" x="291" y="166"/><use href="#q1" x="292" y="222.4"/><use href="#q1" x="293" y="224"/><use href="#q1" x="294" y="194.4"/><use href="#q1" x="295" y="192.6"/><use href="#q1" x="296" y="217.5"/><use href="#q1" x="297" y="166"/><use href="#q1" x="298" y="192.4"/><use href="#q1" x="299" y="204.3"/><use href="#q1" x="300" y="205.1"/><use href="#q1" x="301" y="201"/><use href="#q1" x="302" y="186.2"/><use href="#q1" x="303" y="194.9"/><use href="#q1" x="304" y="216.9"/><use href="#q1" x="305" y="216.5"/><use href="#q1" x="306" y="216.2"/><use href="#q1" x="307" y="212.9"/><use href="#q1" x="308" y="218.5"/><use href="#q1" x="309" y="196.2"/><use href="#q1" x="310" y="175.5"/><use href="#q1" x="311" y="217"/><use href="#q1" x="312" y="201.3"/><use href="#q1" x="313" y="218.8"/><use href="#q1" x="314" y="193.3"/><use href="#q1" x="315" y="178.1"/><use href="#q1" x="316" y="182.9"/><use href="#q1" x="317" y="199"/><use href="#q1" x="318" y="166"/><use href="#q1" x="319" y="217.8"/><use href="#q1" x="320" y="227.8"/><use href="#q1" x="321" y="194.6"/><use href="#q1" x="322" y="220"/><use href="#q1" x="323" y="186.9"/><use href="#q1" x="324" y="185.1"/><use href="#q1" x="325" y="190.1"/><use href="#q1" x="326" y="213.5"/><use href="#q1" x="327" y="223.5"/><use href="#q1" x="328" y="196.8"/><use href="#q1" x="329" y="211.2"/><use href="#q1" x="330" y="166"/><use href="#q1" x="331" y="168.1"/><use href="#q1" x="332" y="166"/><use href="#q1" x="333" y="171.3"/><use href="#q1" x="334" y="177.8"/><use href="#q1" x="335" y="214.6"/><use href="#q1" x="336" y="166"/><use href="#q1" x="337" y="183.7"/><use href="#q1" x="338" y="218.9"/><use href="#q1" x="339" y="219.1"/><use href="#q1" x="340" y="217.5"/><use href="#q1" x="341" y="216.2"/><use href="#q1" x="342" y="207.5"/><use href="#q1" x="343" y="221.7"/><use href="#q1" x="344" y="233.6"/><use href="#q1" x="345" y="200.5"/><use href="#q1" x="346" y="199.5"/><use href="#q1" x="347" y="218.6"/><use href="#q1" x="348" y="217.9"/><use href="#q1" x="349" y="220.3"/><use href="#q1" x="350" y="218.3"/><use href="#q1" x="351" y="193.7"/><use href="#q1" x="352" y="183.7"/><use href="#q1" x="353" y="166"/><use href="#q1" x="354" y="206"/><use href="#q1" x="355" y="208"/><use href="#q1" x="356" y="171.5"/><use href="#q1" x="357" y="166"/><use href="#q1" x="358" y="166"/><use href="#q1" x="359" y="189.8"/><use href="#q1" x="360" y="173.7"/><use href="#q1" x="361" y="207.8"/><use href="#q1" x="362" y="221.3"/><use href="#q1" x="363" y="227.9"/><use href="#q1" x="364" y="218.6"/><use href="#q1" x="365" y="216.5"/><use href="#q1" x="366" y="179.5"/><use href="#q1" x="367" y="219.3"/><use href="#q1" x="368" y="228.6"/><use href="#q1" x="369" y="234.1"/><use href="#q1" x="370" y="194.3"/><use href="#q1" x="371" y="214.6"/><use href="#q1" x="372" y="187.3"/><use href="#q1" x="373" y="185.2"/><use href="#q1" x="374" y="204.4"/><use href="#q1" x="375" y="204.4"/><use href="#q1" x="376" y="192.1"/><use href="#q1" x="377" y="166"/><use href="#q1" x="378" y="194.1"/><use href="#q1" x="379" y="174.6"/><use href="#q1" x="380" y="190.2"/><use href="#q1" x="381" y="192.2"/><use href="#q1" x="382" y="212"/><use href="#q1" x="383" y="198.6"/><use href="#q1" x="384" y="170.2"/><use href="#q1" x="385" y="220.3"/><use href="#q1" x="386" y="228.5"/><use href="#q1" x="387" y="200.8"/><use href="#q1" x="388" y="218.9"/><use href="#q1" x="389" y="205.2"/><use href="#q1" x="390" y="179"/><use href="#q1" x="391" y="206.9"/><use href="#q1" x="392" y="206.5"/><use href="#q1" x="393" y="205.9"/><use href="#q1" x="394" y="214.8"/><use href="#q1" x="395" y="204.6"/><use href="#q1" x="396" y="207.6"/><use href="#q1" x="397" y="214.3"/><use href="#q1" x="398" y="222.1"/><use href="#q1" x="399" y="217.9"/><use href="#q1" x="400" y="204.3"/><use href="#q1" x="401" y="175.7"/><use href="#q1" x="402" y="202.9"/><use href="#q1" x="403" y="217.9"/><use href="#q1" x="404" y="222.7"/><use href="#q1" x="405" y="218.4"/><use href="#q1" x="406" y="194.4"/><use href="#q1" x="407" y="166"/><use href="#q1" x="408" y="218"/><use href="#q1" x="409" y="216.7"/><use href="#q1" x="410" y="166"/><use href="#q1" x="411" y="194.2"/><use href="#q1" x="412" y="217.6"/><use href="#q1" x="413" y="221.2"/><use href="#q1" x="414" y="201.9"/><use href="#q1" x="415" y="166"/><use href="#q1" x="416" y="182.7"/><use href="#q1" x="417" y="184.7"/><use href="#q1" x="418" y="172.3"/><use href="#q1" x="419" y="205.8"/><use href="#q1" x="420" y="207.5"/><use href="#q1" x="421" y="218.6"/><use href="#q1" x="422" y="189.9"/><use href="#q1" x="423" y="218.1"/><use href="#q1" x="424" y="181.3"/><use href="#q1" x="425" y="179.4"/><use href="#q1" x="426" y="211.2"/><use href="#q1" x="427" y="223.8"/><use href="#q1" x="428" y="228"/><use href="#q1" x="429" y="192.3"/><use href="#q1" x="430" y="211.7"/><use href="#q1" x="431" y="219.3"/><use href="#q1" x="432" y="202.1"/><use href="#q1" x="433" y="187.4"/><use href="#q1" x="434" y="225.6"/><use href="#q1" x="435" y="230.2"/><use href="#q1" x="436" y="221.7"/><use href="#q1" x="437" y="166"/><use href="#q1" x="438" y="210.1"/><use href="#q1" x="439" y="167.9"/><use href="#q1" x="440" y="166"/><use href="#q1" x="441" y="166"/><use href="#q1" x="442" y="166.1"/><use href="#q1" x="443" y="190.3"/><use href="#q1" x="444" y="179"/><use href="#q1" x="445" y="183.9"/><use href="#q1" x="446" y="217.5"/><use href="#q1" x="447" y="198.3"/><use href="#q1" x="448" y="196.9"/><use href="#q1" x="449" y="221.7"/><use href="#q1" x="450" y="197.9"/><use href="#q1" x="451" y="225.5"/><use href="#q1" x="452" y="188.5"/><use href="#q1" x="453" y="212"/><use href="#q1" x="454" y="191.5"/><use href="#q1" x="455" y="169.8"/><use href="#q1" x="456" y="166.6"/><use href="#q1" x="457" y="222.3"/><use href="#q1" x="458" y="228.4"/><use href="#q1" x="459" y="185.8"/><use href="#q1" x="460" y="166"/><use href="#q1" x="461" y="193.5"/><use href="#q1" x="462" y="191"/><use href="#q1" x="463" y="182.2"/><use href="#q1" x="464" y="200.2"/><use href="#q1" x="465" y="166"/><use href="#q1" x="466" y="189.6"/><use href="#q1" x="467" y="221.1"/><use href="#q1" x="468" y="202.4"/><use href="#q1" x="469" y="205"/><use href="#q1" x="470" y="196.4"/><use href="#q1" x="471" y="176"/><use href="#q1" x="472" y="206.5"/><use href="#q1" x="473" y="203"/><use href="#q1" x="474" y="196.4"/><use href="#q1" x="475" y="188.4"/><use href="#q1" x="476" y="181.2"/><use href="#q1" x="477" y="202.4"/><use href="#q1" x="478" y="174.8"/><use href="#q1" x="479" y="212.7"/><use href="#q1" x="480" y="221.4"/><use href="#q1" x="481" y="191.5"/><use href="#q1" x="482" y="207.7"/><use href="#q1" x="483" y="176.9"/><use href="#q1" x="484" y="189.7"/><use href="#q1" x="485" y="213.2"/><use href="#q1" x="486" y="193.7"/><use href="#q1" x="487" y="201.6"/><use href="#q1" x="488" y="221.1"/><use href="#q1" x="489" y="215.1"/><use href="#q1" x="490" y="210.5"/><use href="#q1" x="491" y="198.2"/><use href="#q1" x="492" y="225.9"/><use href="#q1" x="493" y="203.2"/><use href="#q1" x="494" y="170.3"/><use href="#q1" x="495" y="175.4"/><use href="#q1" x="496" y="216.3"/><use href="#q1" x="497" y="216.7"/><use href="#q1" x="498" y="190.1"/><use href="#q1" x="499" y="226"/><use href="#q1" x="500" y="221.9"/><use href="#q1" x="501" y="208"/><use href="#q1" x="502" y="185"/><use href="#q1" x="503" y="224.3"/><use href="#q1" x="504" y="181.8"/><use href="#q1" x="505" y="194.3"/><use href="#q1" x="506" y="203.6"/><use href="#q1" x="507" y="166"/><use href="#q1" x="508" y="174.7"/><use href="#q1" x="509" y="173.2"/><use href="#q1" x="510" y="166"/><use href="#q1" x="511" y="166"/><use href="#q1" x="512" y="166"/><use href="#q1" x="513" y="220.6"/><use href="#q1" x="514" y="225.9"/><use href="#q1" x="515" y="222"/><use href="#q1" x="516" y="231.6"/><use href="#q1" x="517" y="199.9"/><use href="#q1" x="518" y="185.9"/><use href="#q1" x="519" y="166"/><use href="#q1" x="520" y="209.8"/><use href="#q1" x="521" y="219.5"/><use href="#q1" x="522" y="193.8"/><use href="#q1" x="523" y="226.2"/><use href="#q1" x="524" y="223.3"/><use href="#q1" x="525" y="216"/><use href="#q1" x="526" y="212.5"/><use href="#q1" x="527" y="217.7"/><use href="#q1" x="528" y="222.3"/><use href="#q1" x="529" y="191.9"/><use href="#q1" x="530" y="204.3"/><use href="#q1" x="531" y="186.6"/><use href="#q1" x="532" y="166"/><use href="#q1" x="533" y="171.8"/><use href="#q1" x="534" y="171.7"/><use href="#q1" x="535" y="167.6"/><use href="#q1" x="536" y="176.9"/><use href="#q1" x="537" y="205.5"/><use href="#q1" x="538" y="223.9"/><use href="#q1" x="539" y="204"/><use href="#q1" x="540" y="195.3"/><use href="#q1" x="541" y="217.5"/><use href="#q1" x="542" y="217.3"/><use href="#q1" x="543" y="197.3"/><use href="#q1" x="544" y="176.1"/><use href="#q1" x="545" y="166"/><use href="#q1" x="546" y="185.9"/><use href="#q1" x="547" y="189.6"/><use href="#q1" x="548" y="177.3"/><use href="#q1" x="549" y="222"/><use href="#q1" x="550" y="217.2"/><use href="#q1" x="551" y="204.6"/><use href="#q1" x="552" y="216.6"/><use href="#q1" x="553" y="184.6"/><use href="#q1" x="554" y="211.7"/><use href="#q1" x="555" y="216.1"/><use href="#q1" x="556" y="189.2"/><use href="#q1" x="557" y="226.5"/><use href="#q1" x="558" y="219.7"/><use href="#q1" x="559" y="190.3"/><use href="#q1" x="560" y="179"/><use href="#q1" x="561" y="173.6"/><use href="#q1" x="562" y="180"/><use href="#q1" x="563" y="217.1"/><use href="#q1" x="564" y="220.9"/><use href="#q1" x="565" y="227.1"/><use href="#q1" x="566" y="239.5"/><use href="#q1" x="567" y="226.6"/><use href="#q1" x="568" y="186.5"/><use href="#q1" x="569" y="218.7"/><use href="#q1" x="570" y="227.9"/><use href="#q1" x="571" y="217.8"/><use href="#q1" x="572" y="192"/><use href="#q1" x="573" y="207.8"/><use href="#q1" x="574" y="214.1"/><use href="#q1" x="575" y="197.5"/><use href="#q1" x="576" y="202.4"/><use href="#q1" x="577" y="188"/><use href="#q1" x="578" y="212.8"/><use href="#q1" x="579" y="187.8"/><use href="#q1" x="580" y="190.8"/><use href="#q1" x="581" y="166"/><use href="#q1" x="582" y="166"/><use href="#q1" x="583" y="175"/><use href="#q1" x="584" y="224.4"/><use href="#q1" x="585" y="225.2"/><use href="#q1" x="586" y="222.7"/><use href="#q1" x="587" y="188.5"/><use href="#q1" x="588" y="212.7"/><use href="#q1" x="589" y="210.2"/><use href="#q1" x="590" y="215.6"/><use href="#q1" x="591" y="223"/><use href="#q1" x="592" y="211.6"/><use href="#q1" x="593" y="194.9"/><use href="#q1" x="594" y="166"/><use href="#q1" x="595" y="219.5"/><use href="#q1" x="596" y="190.8"/><use href="#q1" x="597" y="187.3"/><use href="#q1" x="598" y="219.1"/><use href="#q1" x="599" y="167.2"/><use href="#q1" x="600" y="166"/><use href="#q1" x="601" y="183.5"/><use href="#q1" x="602" y="172.9"/><use href="#q1" x="603" y="187.3"/><use href="#q1" x="604" y="187.2"/><use href="#q1" x="605" y="183.4"/><use href="#q1" x="606" y="206.5"/><use href="#q1" x="607" y="214.1"/><use href="#q1" x="608" y="167.9"/><use href="#q1" x="609" y="205.9"/><use href="#q1" x="610" y="225.3"/><use href="#q1" x="611" y="233.1"/><use href="#q1" x="612" y="243"/><use href="#q1" x="613" y="239.1"/><use href="#q1" x="614" y="223.6"/><use href="#q1" x="615" y="211.4"/><use href="#q1" x="616" y="205.5"/><use href="#q1" x="617" y="192.9"/><use href="#q1" x="618" y="207.7"/><use href="#q1" x="619" y="192.6"/><use href="#q1" x="620" y="194.5"/><use href="#q1" x="621" y="166"/><use href="#q1" x="622" y="166"/><use href="#q1" x="623" y="171.3"/><use href="#q1" x="624" y="213.2"/><use href="#q1" x="625" y="216.4"/><use href="#q1" x="626" y="178.9"/><use href="#q1" x="627" y="223.8"/><use href="#q1" x="628" y="218.9"/><use href="#q1" x="629" y="179.6"/><use href="#q1" x="630" y="215.6"/><use href="#q1" x="631" y="180.5"/><use href="#q1" x="632" y="210.3"/><use href="#q1" x="633" y="212.1"/><use href="#q1" x="634" y="204"/><use href="#q1" x="635" y="182.6"/><use href="#q1" x="636" y="206.1"/><use href="#q1" x="637" y="217.6"/><use href="#q1" x="638" y="200.4"/><use href="#q1" x="639" y="188.4"/><use href="#q1" x="640" y="167"/><use href="#q1" x="641" y="166"/><use href="#q1" x="642" y="196.6"/><use href="#q1" x="643" y="190.2"/><use href="#q1" x="644" y="186.5"/><use href="#q1" x="645" y="215.2"/><use href="#q1" x="646" y="207.6"/><use href="#q1" x="647" y="230.4"/><use href="#q1" x="648" y="206.5"/><use href="#q1" x="649" y="211.3"/><use href="#q1" x="650" y="220.2"/><use href="#q1" x="651" y="206.8"/><use href="#q1" x="652" y="183.3"/><use href="#q1" x="653" y="195.4"/><use href="#q1" x="654" y="207.7"/><use href="#q1" x="655" y="208.3"/><use href="#q1" x="656" y="166.6"/><use href="#q1" x="657" y="203.7"/><use href="#q1" x="658" y="186.7"/><use href="#q1" x="659" y="175.4"/><use href="#q1" x="660" y="213.5"/><use href="#q1" x="661" y="166"/><use href="#q1" x="662" y="166"/><use href="#q1" x="663" y="186.5"/><use href="#q1" x="664" y="230.3"/><use href="#q1" x="665" y="227.3"/><use href="#q1" x="666" y="199.1"/><use href="#q1" x="667" y="168.3"/><use href="#q1" x="668" y="166"/><use href="#q1" x="669" y="194.3"/><use href="#q1" x="670" y="188.9"/><use href="#q1" x="671" y="191.2"/><use href="#q1" x="672" y="183"/><use href="#q1" x="673" y="202.9"/><use href="#q1" x="674" y="224.3"/><use href="#q1" x="675" y="196.9"/><use href="#q1" x="676" y="223.5"/><use href="#q1" x="677" y="224.5"/><use href="#q1" x="678" y="233.7"/><use href="#q1" x="679" y="221.6"/><use href="#q1" x="680" y="195.4"/><use href="#q1" x="681" y="193.4"/><use href="#q1" x="682" y="166"/><use href="#q1" x="683" y="166"/><use href="#q1" x="684" y="214.9"/><use href="#q1" x="685" y="217.8"/><use href="#q1" x="686" y="166.7"/><use href="#q1" x="687" y="199.5"/><use href="#q1" x="688" y="206.4"/><use href="#q1" x="689" y="212.8"/><use href="#q1" x="690" y="209.1"/><use href="#q1" x="691" y="201.3"/><use href="#q1" x="692" y="210.7"/><rect x="79" y="166" width="1" height="90" fill="url(#ks)" opacity="0.6"/><rect x="85" y="166" width="1" height="85" fill="url(#ks)" opacity="1"/><rect x="87" y="166" width="1" height="85" fill="url(#ks)" opacity="0.7"/><rect x="89" y="166" width="1" height="125" fill="url(#ks)" opacity="0.85"/><rect x="93" y="166" width="1" height="50" fill="url(#ks)" opacity="0.6"/><rect x="97" y="166" width="1" height="90" fill="url(#ks)" opacity="0.85"/><rect x="100" y="166" width="1" height="40" fill="url(#ks)" opacity="0.6"/><rect x="102" y="166" width="1" height="30" fill="url(#ks)" opacity="0.7"/><rect x="106" y="166" width="1" height="80" fill="url(#ks)" opacity="0.85"/><rect x="110" y="166" width="1" height="100" fill="url(#ks)" opacity="0.85"/><rect x="114" y="166" width="1" height="40" fill="url(#ks)" opacity="0.5"/><rect x="116" y="166" width="1" height="70" fill="url(#ks)" opacity="0.85"/><rect x="119" y="166" width="1" height="80" fill="url(#ks)" opacity="1"/><rect x="122" y="166" width="1" height="80" fill="url(#ks)" opacity="1"/><rect x="127" y="166" width="1" height="110" fill="url(#ks)" opacity="0.5"/><rect x="130" y="166" width="1" height="110" fill="url(#ks)" opacity="0.6"/><rect x="133" y="166" width="1" height="100" fill="url(#ks)" opacity="1"/><rect x="136" y="166" width="1" height="60" fill="url(#ks)" opacity="1"/><rect x="138" y="166" width="1" height="40" fill="url(#ks)" opacity="0.85"/><rect x="140" y="166" width="1" height="40" fill="url(#ks)" opacity="0.85"/><rect x="143" y="166" width="1" height="80" fill="url(#ks)" opacity="0.85"/><rect x="146" y="166" width="1" height="100" fill="url(#ks)" opacity="0.5"/><rect x="152" y="166" width="1" height="75" fill="url(#ks)" opacity="1"/><rect x="154" y="166" width="1" height="30" fill="url(#ks)" opacity="0.7"/><rect x="156" y="166" width="1" height="100" fill="url(#ks)" opacity="1"/><rect x="162" y="166" width="1" height="80" fill="url(#ks)" opacity="0.7"/><rect x="163" y="166" width="1" height="30" fill="url(#ks)" opacity="0.7"/><rect x="167" y="166" width="1" height="50" fill="url(#ks)" opacity="0.85"/><rect x="170" y="166" width="1" height="90" fill="url(#ks)" opacity="0.85"/><rect x="174" y="166" width="1" height="90" fill="url(#ks)" opacity="0.7"/><rect x="177" y="166" width="1" height="125" fill="url(#ks)" opacity="0.6"/><rect x="180" y="166" width="1" height="70" fill="url(#ks)" opacity="1"/><rect x="184" y="166" width="1" height="30" fill="url(#ks)" opacity="0.85"/><rect x="185" y="166" width="1" height="100" fill="url(#ks)" opacity="1"/><rect x="188" y="166" width="1" height="110" fill="url(#ks)" opacity="0.7"/><rect x="193" y="166" width="1" height="75" fill="url(#ks)" opacity="1"/><rect x="197" y="166" width="1" height="30" fill="url(#ks)" opacity="1"/><rect x="201" y="166" width="1" height="30" fill="url(#ks)" opacity="0.7"/><rect x="203" y="166" width="1" height="70" fill="url(#ks)" opacity="1"/><rect x="205" y="166" width="1" height="50" fill="url(#ks)" opacity="0.7"/><rect x="210" y="166" width="1" height="70" fill="url(#ks)" opacity="0.7"/><rect x="211" y="166" width="1" height="30" fill="url(#ks)" opacity="1"/><rect x="215" y="166" width="1" height="60" fill="url(#ks)" opacity="0.7"/><rect x="218" y="166" width="1" height="110" fill="url(#ks)" opacity="0.85"/><rect x="221" y="166" width="1" height="75" fill="url(#ks)" opacity="0.7"/><rect x="225" y="166" width="1" height="50" fill="url(#ks)" opacity="0.5"/><rect x="229" y="166" width="1" height="60" fill="url(#ks)" opacity="1"/><rect x="231" y="166" width="1" height="40" fill="url(#ks)" opacity="0.5"/><rect x="235" y="166" width="1" height="100" fill="url(#ks)" opacity="0.6"/><rect x="238" y="166" width="1" height="110" fill="url(#ks)" opacity="0.5"/><rect x="242" y="166" width="1" height="80" fill="url(#ks)" opacity="0.7"/><rect x="245" y="166" width="1" height="110" fill="url(#ks)" opacity="0.85"/><rect x="248" y="166" width="1" height="80" fill="url(#ks)" opacity="0.5"/><rect x="250" y="166" width="1" height="30" fill="url(#ks)" opacity="0.85"/><rect x="255" y="166" width="1" height="125" fill="url(#ks)" opacity="0.6"/><rect x="258" y="166" width="1" height="110" fill="url(#ks)" opacity="1"/><rect x="261" y="166" width="1" height="60" fill="url(#ks)" opacity="0.5"/><rect x="263" y="166" width="1" height="60" fill="url(#ks)" opacity="0.5"/><rect x="269" y="166" width="1" height="125" fill="url(#ks)" opacity="1"/><rect x="272" y="166" width="1" height="80" fill="url(#ks)" opacity="1"/><rect x="272" y="166" width="1" height="125" fill="url(#ks)" opacity="0.5"/><rect x="277" y="166" width="1" height="60" fill="url(#ks)" opacity="0.5"/><rect x="279" y="166" width="1" height="100" fill="url(#ks)" opacity="0.5"/><rect x="282" y="166" width="1" height="90" fill="url(#ks)" opacity="0.85"/><rect x="286" y="166" width="1" height="60" fill="url(#ks)" opacity="0.5"/><rect x="289" y="166" width="1" height="70" fill="url(#ks)" opacity="0.6"/><rect x="293" y="166" width="1" height="100" fill="url(#ks)" opacity="0.85"/><rect x="297" y="166" width="1" height="60" fill="url(#ks)" opacity="0.7"/><rect x="298" y="166" width="1" height="75" fill="url(#ks)" opacity="0.5"/><rect x="304" y="166" width="1" height="30" fill="url(#ks)" opacity="0.5"/><rect x="305" y="166" width="1" height="30" fill="url(#ks)" opacity="0.5"/><rect x="309" y="166" width="1" height="75" fill="url(#ks)" opacity="0.5"/><rect x="312" y="166" width="1" height="80" fill="url(#ks)" opacity="1"/><rect x="315" y="166" width="1" height="60" fill="url(#ks)" opacity="0.7"/><rect x="318" y="166" width="1" height="90" fill="url(#ks)" opacity="0.5"/><rect x="323" y="166" width="1" height="100" fill="url(#ks)" opacity="0.6"/><rect x="325" y="166" width="1" height="100" fill="url(#ks)" opacity="1"/><rect x="329" y="166" width="1" height="30" fill="url(#ks)" opacity="1"/><rect x="331" y="166" width="1" height="110" fill="url(#ks)" opacity="0.85"/><rect x="335" y="166" width="1" height="125" fill="url(#ks)" opacity="0.85"/><rect x="337" y="166" width="1" height="60" fill="url(#ks)" opacity="1"/><rect x="342" y="166" width="1" height="40" fill="url(#ks)" opacity="0.85"/><rect x="345" y="166" width="1" height="30" fill="url(#ks)" opacity="0.7"/><rect x="350" y="166" width="1" height="90" fill="url(#ks)" opacity="0.7"/><rect x="351" y="166" width="1" height="40" fill="url(#ks)" opacity="1"/><rect x="355" y="166" width="1" height="125" fill="url(#ks)" opacity="0.7"/><rect x="359" y="166" width="1" height="125" fill="url(#ks)" opacity="0.5"/><rect x="360" y="166" width="1" height="80" fill="url(#ks)" opacity="0.5"/><rect x="364" y="166" width="1" height="110" fill="url(#ks)" opacity="0.85"/><rect x="369" y="166" width="1" height="75" fill="url(#ks)" opacity="0.5"/><rect x="372" y="166" width="1" height="110" fill="url(#ks)" opacity="0.85"/><rect x="374" y="166" width="1" height="40" fill="url(#ks)" opacity="0.5"/><rect x="376" y="166" width="1" height="125" fill="url(#ks)" opacity="0.5"/><rect x="381" y="166" width="1" height="100" fill="url(#ks)" opacity="0.6"/><rect x="383" y="166" width="1" height="50" fill="url(#ks)" opacity="0.6"/><rect x="387" y="166" width="1" height="80" fill="url(#ks)" opacity="0.7"/><rect x="390" y="166" width="1" height="75" fill="url(#ks)" opacity="1"/><rect x="395" y="166" width="1" height="80" fill="url(#ks)" opacity="1"/><rect x="398" y="166" width="1" height="80" fill="url(#ks)" opacity="0.6"/><rect x="400" y="166" width="1" height="100" fill="url(#ks)" opacity="1"/><rect x="402" y="166" width="1" height="80" fill="url(#ks)" opacity="0.6"/><rect x="405" y="166" width="1" height="125" fill="url(#ks)" opacity="0.85"/><rect x="410" y="166" width="1" height="50" fill="url(#ks)" opacity="0.6"/><rect x="414" y="166" width="1" height="50" fill="url(#ks)" opacity="1"/><rect x="417" y="166" width="1" height="125" fill="url(#ks)" opacity="1"/><rect x="420" y="166" width="1" height="80" fill="url(#ks)" opacity="1"/><rect x="424" y="166" width="1" height="70" fill="url(#ks)" opacity="0.5"/><rect x="426" y="166" width="1" height="80" fill="url(#ks)" opacity="0.6"/><rect x="429" y="166" width="1" height="60" fill="url(#ks)" opacity="0.7"/><rect x="433" y="166" width="1" height="50" fill="url(#ks)" opacity="0.85"/><rect x="436" y="166" width="1" height="60" fill="url(#ks)" opacity="0.85"/><rect x="438" y="166" width="1" height="125" fill="url(#ks)" opacity="0.5"/><rect x="443" y="166" width="1" height="30" fill="url(#ks)" opacity="0.85"/><rect x="446" y="166" width="1" height="110" fill="url(#ks)" opacity="0.5"/><rect x="449" y="166" width="1" height="60" fill="url(#ks)" opacity="0.6"/><rect x="450" y="166" width="1" height="100" fill="url(#ks)" opacity="0.5"/><rect x="454" y="166" width="1" height="30" fill="url(#ks)" opacity="0.7"/><rect x="458" y="166" width="1" height="125" fill="url(#ks)" opacity="0.5"/><rect x="460" y="166" width="1" height="70" fill="url(#ks)" opacity="0.5"/><rect x="464" y="166" width="1" height="125" fill="url(#ks)" opacity="0.7"/><rect x="466" y="166" width="1" height="75" fill="url(#ks)" opacity="0.85"/><rect x="471" y="166" width="1" height="60" fill="url(#ks)" opacity="1"/><rect x="474" y="166" width="1" height="90" fill="url(#ks)" opacity="0.7"/><rect x="479" y="166" width="1" height="40" fill="url(#ks)" opacity="0.85"/><rect x="480" y="166" width="1" height="90" fill="url(#ks)" opacity="0.7"/><rect x="484" y="166" width="1" height="125" fill="url(#ks)" opacity="0.7"/><rect x="488" y="166" width="1" height="70" fill="url(#ks)" opacity="0.7"/><rect x="491" y="166" width="1" height="75" fill="url(#ks)" opacity="1"/><rect x="494" y="166" width="1" height="90" fill="url(#ks)" opacity="0.7"/><rect x="497" y="166" width="1" height="110" fill="url(#ks)" opacity="1"/><rect x="500" y="166" width="1" height="125" fill="url(#ks)" opacity="0.6"/><rect x="503" y="166" width="1" height="110" fill="url(#ks)" opacity="0.85"/><rect x="505" y="166" width="1" height="90" fill="url(#ks)" opacity="0.6"/><rect x="510" y="166" width="1" height="110" fill="url(#ks)" opacity="1"/><rect x="513" y="166" width="1" height="110" fill="url(#ks)" opacity="0.6"/><rect x="516" y="166" width="1" height="50" fill="url(#ks)" opacity="0.5"/><rect x="520" y="166" width="1" height="90" fill="url(#ks)" opacity="1"/><rect x="522" y="166" width="1" height="70" fill="url(#ks)" opacity="0.7"/><rect x="524" y="166" width="1" height="50" fill="url(#ks)" opacity="0.5"/><rect x="529" y="166" width="1" height="60" fill="url(#ks)" opacity="1"/><rect x="533" y="166" width="1" height="80" fill="url(#ks)" opacity="0.85"/><rect x="535" y="166" width="1" height="40" fill="url(#ks)" opacity="0.6"/><rect x="539" y="166" width="1" height="110" fill="url(#ks)" opacity="0.5"/><rect x="541" y="166" width="1" height="60" fill="url(#ks)" opacity="1"/><rect x="546" y="166" width="1" height="80" fill="url(#ks)" opacity="0.6"/><rect x="549" y="166" width="1" height="60" fill="url(#ks)" opacity="1"/><rect x="552" y="166" width="1" height="60" fill="url(#ks)" opacity="0.7"/><rect x="556" y="166" width="1" height="30" fill="url(#ks)" opacity="0.85"/><rect x="559" y="166" width="1" height="80" fill="url(#ks)" opacity="0.7"/><rect x="562" y="166" width="1" height="90" fill="url(#ks)" opacity="0.7"/><rect x="563" y="166" width="1" height="60" fill="url(#ks)" opacity="0.5"/><rect x="569" y="166" width="1" height="110" fill="url(#ks)" opacity="0.6"/><rect x="570" y="166" width="1" height="110" fill="url(#ks)" opacity="0.85"/><rect x="573" y="166" width="1" height="90" fill="url(#ks)" opacity="0.6"/><rect x="578" y="166" width="1" height="110" fill="url(#ks)" opacity="0.85"/><rect x="581" y="166" width="1" height="110" fill="url(#ks)" opacity="0.6"/><rect x="584" y="166" width="1" height="40" fill="url(#ks)" opacity="1"/><rect x="586" y="166" width="1" height="100" fill="url(#ks)" opacity="0.6"/><rect x="590" y="166" width="1" height="30" fill="url(#ks)" opacity="0.7"/><rect x="593" y="166" width="1" height="75" fill="url(#ks)" opacity="0.6"/><rect x="598" y="166" width="1" height="100" fill="url(#ks)" opacity="0.5"/><rect x="601" y="166" width="1" height="75" fill="url(#ks)" opacity="0.6"/><rect x="604" y="166" width="1" height="80" fill="url(#ks)" opacity="0.6"/><rect x="606" y="166" width="1" height="30" fill="url(#ks)" opacity="0.85"/><rect x="611" y="166" width="1" height="125" fill="url(#ks)" opacity="0.6"/><rect x="613" y="166" width="1" height="125" fill="url(#ks)" opacity="0.5"/><rect x="615" y="166" width="1" height="85" fill="url(#ks)" opacity="0.7"/><rect x="619" y="166" width="1" height="125" fill="url(#ks)" opacity="0.85"/><rect x="622" y="166" width="1" height="30" fill="url(#ks)" opacity="0.7"/><rect x="627" y="166" width="1" height="85" fill="url(#ks)" opacity="1"/><rect x="629" y="166" width="1" height="60" fill="url(#ks)" opacity="0.5"/><rect x="631" y="166" width="1" height="75" fill="url(#ks)" opacity="0.6"/><rect x="636" y="166" width="1" height="50" fill="url(#ks)" opacity="0.6"/><rect x="638" y="166" width="1" height="80" fill="url(#ks)" opacity="1"/><rect x="642" y="166" width="1" height="50" fill="url(#ks)" opacity="0.5"/><rect x="645" y="166" width="1" height="50" fill="url(#ks)" opacity="0.5"/><rect x="648" y="166" width="1" height="75" fill="url(#ks)" opacity="0.85"/><rect x="652" y="166" width="1" height="30" fill="url(#ks)" opacity="0.6"/><rect x="653" y="166" width="1" height="85" fill="url(#ks)" opacity="0.5"/><rect x="657" y="166" width="1" height="80" fill="url(#ks)" opacity="0.85"/><rect x="660" y="166" width="1" height="100" fill="url(#ks)" opacity="0.5"/><rect x="666" y="166" width="1" height="100" fill="url(#ks)" opacity="0.5"/><rect x="667" y="166" width="1" height="85" fill="url(#ks)" opacity="0.7"/><rect x="670" y="166" width="1" height="70" fill="url(#ks)" opacity="0.5"/><rect x="675" y="166" width="1" height="75" fill="url(#ks)" opacity="0.7"/><rect x="676" y="166" width="1" height="80" fill="url(#ks)" opacity="0.5"/><rect x="679" y="166" width="1" height="110" fill="url(#ks)" opacity="0.5"/><rect x="683" y="166" width="1" height="30" fill="url(#ks)" opacity="0.85"/><rect x="686" y="166" width="1" height="90" fill="url(#ks)" opacity="0.7"/><rect x="692" y="166" width="1" height="85" fill="url(#ks)" opacity="0.7"/></g></g><g clip-path="url(#c1l)"><g filter="url(#cmA2)"><rect x="77.0" y="245" width="617.5" height="1" fill="#333333"/><rect x="77.0" y="246" width="617.5" height="2" fill="#141414"/><rect x="77.0" y="248" width="617.5" height="10" fill="#060606"/><rect x="77.0" y="258" width="617.5" height="4.5" fill="#141414"/><rect x="77.0" y="262.5" width="617.5" height="1.5" fill="#404040"/><rect x="77.0" y="264" width="617.5" height="7" fill="#222222"/><rect x="77.0" y="271" width="617.5" height="1" fill="#424242"/><rect x="77.0" y="272" width="617.5" height="5" fill="#262626"/><rect x="77.0" y="277" width="617.5" height="2" fill="#363636"/><rect x="77.0" y="279" width="617.5" height="5.3" fill="#1c1c1c"/><rect x="77.0" y="284.3" width="617.5" height="1.1" fill="#5c5c5c"/><rect x="77.0" y="285.4" width="617.5" height="1.2" fill="#0d0d0d"/><rect x="77.0" y="286.6" width="617.5" height="1.4" fill="#4f4f4f"/><rect x="77.0" y="288" width="617.5" height="4.7" fill="#585858"/><rect x="77.0" y="292.7" width="617.5" height="3" fill="#474747"/><rect x="77.0" y="295.7" width="617.5" height="4.5" fill="#333333"/><rect x="77.0" y="300.2" width="617.5" height="1.6" fill="#424242"/><rect x="77.0" y="301.8" width="617.5" height="4.5" fill="#333333"/><rect x="77.0" y="306.3" width="617.5" height="2.3" fill="#666666"/><rect x="77.0" y="308.6" width="617.5" height="1.4" fill="#575757"/><rect x="77.0" y="310" width="617.5" height="3" fill="#262626"/><rect x="77.0" y="313" width="617.5" height="1" fill="#141414"/><rect x="77.0" y="314" width="617.5" height="2" fill="#545454"/><rect x="77.0" y="316" width="617.5" height="1.5" fill="#0a0a0a"/><rect x="77.0" y="317.5" width="617.5" height="1" fill="#6b6b6b"/><rect x="77.0" y="318.5" width="617.5" height="1.1" fill="#999999"/><rect x="77.0" y="319.6" width="617.5" height="10.4" fill="#080808"/><rect x="79" y="166" width="1" height="90" fill="url(#ks)" opacity="0.6"/><rect x="85" y="166" width="1" height="85" fill="url(#ks)" opacity="1"/><rect x="87" y="166" width="1" height="85" fill="url(#ks)" opacity="0.7"/><rect x="89" y="166" width="1" height="125" fill="url(#ks)" opacity="0.85"/><rect x="93" y="166" width="1" height="50" fill="url(#ks)" opacity="0.6"/><rect x="97" y="166" width="1" height="90" fill="url(#ks)" opacity="0.85"/><rect x="100" y="166" width="1" height="40" fill="url(#ks)" opacity="0.6"/><rect x="102" y="166" width="1" height="30" fill="url(#ks)" opacity="0.7"/><rect x="106" y="166" width="1" height="80" fill="url(#ks)" opacity="0.85"/><rect x="110" y="166" width="1" height="100" fill="url(#ks)" opacity="0.85"/><rect x="114" y="166" width="1" height="40" fill="url(#ks)" opacity="0.5"/><rect x="116" y="166" width="1" height="70" fill="url(#ks)" opacity="0.85"/><rect x="119" y="166" width="1" height="80" fill="url(#ks)" opacity="1"/><rect x="122" y="166" width="1" height="80" fill="url(#ks)" opacity="1"/><rect x="127" y="166" width="1" height="110" fill="url(#ks)" opacity="0.5"/><rect x="130" y="166" width="1" height="110" fill="url(#ks)" opacity="0.6"/><rect x="133" y="166" width="1" height="100" fill="url(#ks)" opacity="1"/><rect x="136" y="166" width="1" height="60" fill="url(#ks)" opacity="1"/><rect x="138" y="166" width="1" height="40" fill="url(#ks)" opacity="0.85"/><rect x="140" y="166" width="1" height="40" fill="url(#ks)" opacity="0.85"/><rect x="143" y="166" width="1" height="80" fill="url(#ks)" opacity="0.85"/><rect x="146" y="166" width="1" height="100" fill="url(#ks)" opacity="0.5"/><rect x="152" y="166" width="1" height="75" fill="url(#ks)" opacity="1"/><rect x="154" y="166" width="1" height="30" fill="url(#ks)" opacity="0.7"/><rect x="156" y="166" width="1" height="100" fill="url(#ks)" opacity="1"/><rect x="162" y="166" width="1" height="80" fill="url(#ks)" opacity="0.7"/><rect x="163" y="166" width="1" height="30" fill="url(#ks)" opacity="0.7"/><rect x="167" y="166" width="1" height="50" fill="url(#ks)" opacity="0.85"/><rect x="170" y="166" width="1" height="90" fill="url(#ks)" opacity="0.85"/><rect x="174" y="166" width="1" height="90" fill="url(#ks)" opacity="0.7"/><rect x="177" y="166" width="1" height="125" fill="url(#ks)" opacity="0.6"/><rect x="180" y="166" width="1" height="70" fill="url(#ks)" opacity="1"/><rect x="184" y="166" width="1" height="30" fill="url(#ks)" opacity="0.85"/><rect x="185" y="166" width="1" height="100" fill="url(#ks)" opacity="1"/><rect x="188" y="166" width="1" height="110" fill="url(#ks)" opacity="0.7"/><rect x="193" y="166" width="1" height="75" fill="url(#ks)" opacity="1"/><rect x="197" y="166" width="1" height="30" fill="url(#ks)" opacity="1"/><rect x="201" y="166" width="1" height="30" fill="url(#ks)" opacity="0.7"/><rect x="203" y="166" width="1" height="70" fill="url(#ks)" opacity="1"/><rect x="205" y="166" width="1" height="50" fill="url(#ks)" opacity="0.7"/><rect x="210" y="166" width="1" height="70" fill="url(#ks)" opacity="0.7"/><rect x="211" y="166" width="1" height="30" fill="url(#ks)" opacity="1"/><rect x="215" y="166" width="1" height="60" fill="url(#ks)" opacity="0.7"/><rect x="218" y="166" width="1" height="110" fill="url(#ks)" opacity="0.85"/><rect x="221" y="166" width="1" height="75" fill="url(#ks)" opacity="0.7"/><rect x="225" y="166" width="1" height="50" fill="url(#ks)" opacity="0.5"/><rect x="229" y="166" width="1" height="60" fill="url(#ks)" opacity="1"/><rect x="231" y="166" width="1" height="40" fill="url(#ks)" opacity="0.5"/><rect x="235" y="166" width="1" height="100" fill="url(#ks)" opacity="0.6"/><rect x="238" y="166" width="1" height="110" fill="url(#ks)" opacity="0.5"/><rect x="242" y="166" width="1" height="80" fill="url(#ks)" opacity="0.7"/><rect x="245" y="166" width="1" height="110" fill="url(#ks)" opacity="0.85"/><rect x="248" y="166" width="1" height="80" fill="url(#ks)" opacity="0.5"/><rect x="250" y="166" width="1" height="30" fill="url(#ks)" opacity="0.85"/><rect x="255" y="166" width="1" height="125" fill="url(#ks)" opacity="0.6"/><rect x="258" y="166" width="1" height="110" fill="url(#ks)" opacity="1"/><rect x="261" y="166" width="1" height="60" fill="url(#ks)" opacity="0.5"/><rect x="263" y="166" width="1" height="60" fill="url(#ks)" opacity="0.5"/><rect x="269" y="166" width="1" height="125" fill="url(#ks)" opacity="1"/><rect x="272" y="166" width="1" height="80" fill="url(#ks)" opacity="1"/><rect x="272" y="166" width="1" height="125" fill="url(#ks)" opacity="0.5"/><rect x="277" y="166" width="1" height="60" fill="url(#ks)" opacity="0.5"/><rect x="279" y="166" width="1" height="100" fill="url(#ks)" opacity="0.5"/><rect x="282" y="166" width="1" height="90" fill="url(#ks)" opacity="0.85"/><rect x="286" y="166" width="1" height="60" fill="url(#ks)" opacity="0.5"/><rect x="289" y="166" width="1" height="70" fill="url(#ks)" opacity="0.6"/><rect x="293" y="166" width="1" height="100" fill="url(#ks)" opacity="0.85"/><rect x="297" y="166" width="1" height="60" fill="url(#ks)" opacity="0.7"/><rect x="298" y="166" width="1" height="75" fill="url(#ks)" opacity="0.5"/><rect x="304" y="166" width="1" height="30" fill="url(#ks)" opacity="0.5"/><rect x="305" y="166" width="1" height="30" fill="url(#ks)" opacity="0.5"/><rect x="309" y="166" width="1" height="75" fill="url(#ks)" opacity="0.5"/><rect x="312" y="166" width="1" height="80" fill="url(#ks)" opacity="1"/><rect x="315" y="166" width="1" height="60" fill="url(#ks)" opacity="0.7"/><rect x="318" y="166" width="1" height="90" fill="url(#ks)" opacity="0.5"/><rect x="323" y="166" width="1" height="100" fill="url(#ks)" opacity="0.6"/><rect x="325" y="166" width="1" height="100" fill="url(#ks)" opacity="1"/><rect x="329" y="166" width="1" height="30" fill="url(#ks)" opacity="1"/><rect x="331" y="166" width="1" height="110" fill="url(#ks)" opacity="0.85"/><rect x="335" y="166" width="1" height="125" fill="url(#ks)" opacity="0.85"/><rect x="337" y="166" width="1" height="60" fill="url(#ks)" opacity="1"/><rect x="342" y="166" width="1" height="40" fill="url(#ks)" opacity="0.85"/><rect x="345" y="166" width="1" height="30" fill="url(#ks)" opacity="0.7"/><rect x="350" y="166" width="1" height="90" fill="url(#ks)" opacity="0.7"/><rect x="351" y="166" width="1" height="40" fill="url(#ks)" opacity="1"/><rect x="355" y="166" width="1" height="125" fill="url(#ks)" opacity="0.7"/><rect x="359" y="166" width="1" height="125" fill="url(#ks)" opacity="0.5"/><rect x="360" y="166" width="1" height="80" fill="url(#ks)" opacity="0.5"/><rect x="364" y="166" width="1" height="110" fill="url(#ks)" opacity="0.85"/><rect x="369" y="166" width="1" height="75" fill="url(#ks)" opacity="0.5"/><rect x="372" y="166" width="1" height="110" fill="url(#ks)" opacity="0.85"/><rect x="374" y="166" width="1" height="40" fill="url(#ks)" opacity="0.5"/><rect x="376" y="166" width="1" height="125" fill="url(#ks)" opacity="0.5"/><rect x="381" y="166" width="1" height="100" fill="url(#ks)" opacity="0.6"/><rect x="383" y="166" width="1" height="50" fill="url(#ks)" opacity="0.6"/><rect x="387" y="166" width="1" height="80" fill="url(#ks)" opacity="0.7"/><rect x="390" y="166" width="1" height="75" fill="url(#ks)" opacity="1"/><rect x="395" y="166" width="1" height="80" fill="url(#ks)" opacity="1"/><rect x="398" y="166" width="1" height="80" fill="url(#ks)" opacity="0.6"/><rect x="400" y="166" width="1" height="100" fill="url(#ks)" opacity="1"/><rect x="402" y="166" width="1" height="80" fill="url(#ks)" opacity="0.6"/><rect x="405" y="166" width="1" height="125" fill="url(#ks)" opacity="0.85"/><rect x="410" y="166" width="1" height="50" fill="url(#ks)" opacity="0.6"/><rect x="414" y="166" width="1" height="50" fill="url(#ks)" opacity="1"/><rect x="417" y="166" width="1" height="125" fill="url(#ks)" opacity="1"/><rect x="420" y="166" width="1" height="80" fill="url(#ks)" opacity="1"/><rect x="424" y="166" width="1" height="70" fill="url(#ks)" opacity="0.5"/><rect x="426" y="166" width="1" height="80" fill="url(#ks)" opacity="0.6"/><rect x="429" y="166" width="1" height="60" fill="url(#ks)" opacity="0.7"/><rect x="433" y="166" width="1" height="50" fill="url(#ks)" opacity="0.85"/><rect x="436" y="166" width="1" height="60" fill="url(#ks)" opacity="0.85"/><rect x="438" y="166" width="1" height="125" fill="url(#ks)" opacity="0.5"/><rect x="443" y="166" width="1" height="30" fill="url(#ks)" opacity="0.85"/><rect x="446" y="166" width="1" height="110" fill="url(#ks)" opacity="0.5"/><rect x="449" y="166" width="1" height="60" fill="url(#ks)" opacity="0.6"/><rect x="450" y="166" width="1" height="100" fill="url(#ks)" opacity="0.5"/><rect x="454" y="166" width="1" height="30" fill="url(#ks)" opacity="0.7"/><rect x="458" y="166" width="1" height="125" fill="url(#ks)" opacity="0.5"/><rect x="460" y="166" width="1" height="70" fill="url(#ks)" opacity="0.5"/><rect x="464" y="166" width="1" height="125" fill="url(#ks)" opacity="0.7"/><rect x="466" y="166" width="1" height="75" fill="url(#ks)" opacity="0.85"/><rect x="471" y="166" width="1" height="60" fill="url(#ks)" opacity="1"/><rect x="474" y="166" width="1" height="90" fill="url(#ks)" opacity="0.7"/><rect x="479" y="166" width="1" height="40" fill="url(#ks)" opacity="0.85"/><rect x="480" y="166" width="1" height="90" fill="url(#ks)" opacity="0.7"/><rect x="484" y="166" width="1" height="125" fill="url(#ks)" opacity="0.7"/><rect x="488" y="166" width="1" height="70" fill="url(#ks)" opacity="0.7"/><rect x="491" y="166" width="1" height="75" fill="url(#ks)" opacity="1"/><rect x="494" y="166" width="1" height="90" fill="url(#ks)" opacity="0.7"/><rect x="497" y="166" width="1" height="110" fill="url(#ks)" opacity="1"/><rect x="500" y="166" width="1" height="125" fill="url(#ks)" opacity="0.6"/><rect x="503" y="166" width="1" height="110" fill="url(#ks)" opacity="0.85"/><rect x="505" y="166" width="1" height="90" fill="url(#ks)" opacity="0.6"/><rect x="510" y="166" width="1" height="110" fill="url(#ks)" opacity="1"/><rect x="513" y="166" width="1" height="110" fill="url(#ks)" opacity="0.6"/><rect x="516" y="166" width="1" height="50" fill="url(#ks)" opacity="0.5"/><rect x="520" y="166" width="1" height="90" fill="url(#ks)" opacity="1"/><rect x="522" y="166" width="1" height="70" fill="url(#ks)" opacity="0.7"/><rect x="524" y="166" width="1" height="50" fill="url(#ks)" opacity="0.5"/><rect x="529" y="166" width="1" height="60" fill="url(#ks)" opacity="1"/><rect x="533" y="166" width="1" height="80" fill="url(#ks)" opacity="0.85"/><rect x="535" y="166" width="1" height="40" fill="url(#ks)" opacity="0.6"/><rect x="539" y="166" width="1" height="110" fill="url(#ks)" opacity="0.5"/><rect x="541" y="166" width="1" height="60" fill="url(#ks)" opacity="1"/><rect x="546" y="166" width="1" height="80" fill="url(#ks)" opacity="0.6"/><rect x="549" y="166" width="1" height="60" fill="url(#ks)" opacity="1"/><rect x="552" y="166" width="1" height="60" fill="url(#ks)" opacity="0.7"/><rect x="556" y="166" width="1" height="30" fill="url(#ks)" opacity="0.85"/><rect x="559" y="166" width="1" height="80" fill="url(#ks)" opacity="0.7"/><rect x="562" y="166" width="1" height="90" fill="url(#ks)" opacity="0.7"/><rect x="563" y="166" width="1" height="60" fill="url(#ks)" opacity="0.5"/><rect x="569" y="166" width="1" height="110" fill="url(#ks)" opacity="0.6"/><rect x="570" y="166" width="1" height="110" fill="url(#ks)" opacity="0.85"/><rect x="573" y="166" width="1" height="90" fill="url(#ks)" opacity="0.6"/><rect x="578" y="166" width="1" height="110" fill="url(#ks)" opacity="0.85"/><rect x="581" y="166" width="1" height="110" fill="url(#ks)" opacity="0.6"/><rect x="584" y="166" width="1" height="40" fill="url(#ks)" opacity="1"/><rect x="586" y="166" width="1" height="100" fill="url(#ks)" opacity="0.6"/><rect x="590" y="166" width="1" height="30" fill="url(#ks)" opacity="0.7"/><rect x="593" y="166" width="1" height="75" fill="url(#ks)" opacity="0.6"/><rect x="598" y="166" width="1" height="100" fill="url(#ks)" opacity="0.5"/><rect x="601" y="166" width="1" height="75" fill="url(#ks)" opacity="0.6"/><rect x="604" y="166" width="1" height="80" fill="url(#ks)" opacity="0.6"/><rect x="606" y="166" width="1" height="30" fill="url(#ks)" opacity="0.85"/><rect x="611" y="166" width="1" height="125" fill="url(#ks)" opacity="0.6"/><rect x="613" y="166" width="1" height="125" fill="url(#ks)" opacity="0.5"/><rect x="615" y="166" width="1" height="85" fill="url(#ks)" opacity="0.7"/><rect x="619" y="166" width="1" height="125" fill="url(#ks)" opacity="0.85"/><rect x="622" y="166" width="1" height="30" fill="url(#ks)" opacity="0.7"/><rect x="627" y="166" width="1" height="85" fill="url(#ks)" opacity="1"/><rect x="629" y="166" width="1" height="60" fill="url(#ks)" opacity="0.5"/><rect x="631" y="166" width="1" height="75" fill="url(#ks)" opacity="0.6"/><rect x="636" y="166" width="1" height="50" fill="url(#ks)" opacity="0.6"/><rect x="638" y="166" width="1" height="80" fill="url(#ks)" opacity="1"/><rect x="642" y="166" width="1" height="50" fill="url(#ks)" opacity="0.5"/><rect x="645" y="166" width="1" height="50" fill="url(#ks)" opacity="0.5"/><rect x="648" y="166" width="1" height="75" fill="url(#ks)" opacity="0.85"/><rect x="652" y="166" width="1" height="30" fill="url(#ks)" opacity="0.6"/><rect x="653" y="166" width="1" height="85" fill="url(#ks)" opacity="0.5"/><rect x="657" y="166" width="1" height="80" fill="url(#ks)" opacity="0.85"/><rect x="660" y="166" width="1" height="100" fill="url(#ks)" opacity="0.5"/><rect x="666" y="166" width="1" height="100" fill="url(#ks)" opacity="0.5"/><rect x="667" y="166" width="1" height="85" fill="url(#ks)" opacity="0.7"/><rect x="670" y="166" width="1" height="70" fill="url(#ks)" opacity="0.5"/><rect x="675" y="166" width="1" height="75" fill="url(#ks)" opacity="0.7"/><rect x="676" y="166" width="1" height="80" fill="url(#ks)" opacity="0.5"/><rect x="679" y="166" width="1" height="110" fill="url(#ks)" opacity="0.5"/><rect x="683" y="166" width="1" height="30" fill="url(#ks)" opacity="0.85"/><rect x="686" y="166" width="1" height="90" fill="url(#ks)" opacity="0.7"/><rect x="692" y="166" width="1" height="85" fill="url(#ks)" opacity="0.7"/></g></g><g clip-path="url(#c1)"><rect x="79" y="310" width="613.5" height="3" fill="#b070d0" opacity="0.6"/><rect x="79" y="318.5" width="613.5" height="1.1" fill="#e0a040" opacity="0.8"/><rect x="692" y="166" width="1" height="157" fill="#000018"/></g><g clip-path="url(#c2u)"><g filter="url(#cmB)"><rect x="77.0" y="326" width="617.5" height="12" fill="#1c1c1c"/><rect x="77.0" y="338" width="617.5" height="12" fill="#131313"/><rect x="77.0" y="350" width="617.5" height="15" fill="#0b0b0b"/><rect x="77.0" y="365" width="617.5" height="15" fill="#080808"/><rect x="77.0" y="380" width="617.5" height="1.5" fill="#303030"/><rect x="77.0" y="381.5" width="617.5" height="7.5" fill="#0a0a0a"/><rect x="77.0" y="389" width="617.5" height="1" fill="#2b2b2b"/><rect x="77.0" y="390" width="617.5" height="3.6" fill="#212121"/><use href="#q2" x="79" y="338.4"/><use href="#q2" x="80" y="346.8"/><use href="#q2" x="81" y="348.5"/><use href="#q2" x="82" y="359.2"/><use href="#q2" x="83" y="362.8"/><use href="#q2" x="84" y="339.6"/><use href="#q2" x="85" y="332"/><use href="#q2" x="86" y="332"/><use href="#q2" x="87" y="350.4"/><use href="#q2" x="88" y="340.3"/><use href="#q2" x="89" y="336.3"/><use href="#q2" x="90" y="338.3"/><use href="#q2" x="91" y="356.2"/><use href="#q2" x="92" y="365.7"/><use href="#q2" x="93" y="341.3"/><use href="#q2" x="94" y="364.5"/><use href="#q2" x="95" y="355.5"/><use href="#q2" x="96" y="332"/><use href="#q2" x="97" y="355.8"/><use href="#q2" x="98" y="332"/><use href="#q2" x="99" y="338.5"/><use href="#q2" x="100" y="336.2"/><use href="#q2" x="101" y="338.6"/><use href="#q2" x="102" y="332"/><use href="#q2" x="103" y="332"/><use href="#q2" x="104" y="356.4"/><use href="#q2" x="105" y="363"/><use href="#q2" x="106" y="337.2"/><use href="#q2" x="107" y="332"/><use href="#q2" x="108" y="348.9"/><use href="#q2" x="109" y="340.6"/><use href="#q2" x="110" y="332"/><use href="#q2" x="111" y="354.2"/><use href="#q2" x="112" y="338.9"/><use href="#q2" x="113" y="358.4"/><use href="#q2" x="114" y="332"/><use href="#q2" x="115" y="332"/><use href="#q2" x="116" y="332"/><use href="#q2" x="117" y="332"/><use href="#q2" x="118" y="332"/><use href="#q2" x="119" y="332"/><use href="#q2" x="120" y="332"/><use href="#q2" x="121" y="332"/><use href="#q2" x="122" y="332"/><use href="#q2" x="123" y="363.6"/><use href="#q2" x="124" y="339.5"/><use href="#q2" x="125" y="370.7"/><use href="#q2" x="126" y="381.5"/><use href="#q2" x="127" y="375.2"/><use href="#q2" x="128" y="337"/><use href="#q2" x="129" y="340.5"/><use href="#q2" x="130" y="365.6"/><use href="#q2" x="131" y="357.6"/><use href="#q2" x="132" y="343.6"/><use href="#q2" x="133" y="340.1"/><use href="#q2" x="134" y="332"/><use href="#q2" x="135" y="357.8"/><use href="#q2" x="136" y="349.9"/><use href="#q2" x="137" y="336.4"/><use href="#q2" x="138" y="332"/><use href="#q2" x="139" y="337.9"/><use href="#q2" x="140" y="332"/><use href="#q2" x="141" y="349.2"/><use href="#q2" x="142" y="332"/><use href="#q2" x="143" y="357.8"/><use href="#q2" x="144" y="355.3"/><use href="#q2" x="145" y="355.7"/><use href="#q2" x="146" y="378.3"/><use href="#q2" x="147" y="378"/><use href="#q2" x="148" y="366.8"/><use href="#q2" x="149" y="339.5"/><use href="#q2" x="150" y="332"/><use href="#q2" x="151" y="332"/><use href="#q2" x="152" y="332"/><use href="#q2" x="153" y="342.1"/><use href="#q2" x="154" y="357.9"/><use href="#q2" x="155" y="340.1"/><use href="#q2" x="156" y="335.6"/><use href="#q2" x="157" y="332"/><use href="#q2" x="158" y="353.6"/><use href="#q2" x="159" y="332"/><use href="#q2" x="160" y="358.4"/><use href="#q2" x="161" y="353.8"/><use href="#q2" x="162" y="347.8"/><use href="#q2" x="163" y="332"/><use href="#q2" x="164" y="361.1"/><use href="#q2" x="165" y="335.2"/><use href="#q2" x="166" y="340.9"/><use href="#q2" x="167" y="332"/><use href="#q2" x="168" y="332.9"/><use href="#q2" x="169" y="339.7"/><use href="#q2" x="170" y="332"/><use href="#q2" x="171" y="355.4"/><use href="#q2" x="172" y="348.1"/><use href="#q2" x="173" y="350.7"/><use href="#q2" x="174" y="335.8"/><use href="#q2" x="175" y="332"/><use href="#q2" x="176" y="344.9"/><use href="#q2" x="177" y="351.1"/><use href="#q2" x="178" y="351.5"/><use href="#q2" x="179" y="332"/><use href="#q2" x="180" y="332"/><use href="#q2" x="181" y="332"/><use href="#q2" x="182" y="332"/><use href="#q2" x="183" y="334.8"/><use href="#q2" x="184" y="351.1"/><use href="#q2" x="185" y="365.5"/><use href="#q2" x="186" y="381"/><use href="#q2" x="187" y="374.2"/><use href="#q2" x="188" y="332"/><use href="#q2" x="189" y="349.4"/><use href="#q2" x="190" y="332"/><use href="#q2" x="191" y="332"/><use href="#q2" x="192" y="332"/><use href="#q2" x="193" y="350.3"/><use href="#q2" x="194" y="351.8"/><use href="#q2" x="195" y="353.8"/><use href="#q2" x="196" y="342.7"/><use href="#q2" x="197" y="340.2"/><use href="#q2" x="198" y="347.2"/><use href="#q2" x="199" y="332"/><use href="#q2" x="200" y="354.6"/><use href="#q2" x="201" y="332"/><use href="#q2" x="202" y="360.1"/><use href="#q2" x="203" y="358.5"/><use href="#q2" x="204" y="332"/><use href="#q2" x="205" y="334.6"/><use href="#q2" x="206" y="332"/><use href="#q2" x="207" y="332"/><use href="#q2" x="208" y="360"/><use href="#q2" x="209" y="353.7"/><use href="#q2" x="210" y="353.4"/><use href="#q2" x="211" y="350.7"/><use href="#q2" x="212" y="332.3"/><use href="#q2" x="213" y="332.1"/><use href="#q2" x="214" y="354.7"/><use href="#q2" x="215" y="332"/><use href="#q2" x="216" y="339.5"/><use href="#q2" x="217" y="335.3"/><use href="#q2" x="218" y="332"/><use href="#q2" x="219" y="332"/><use href="#q2" x="220" y="355.3"/><use href="#q2" x="221" y="352"/><use href="#q2" x="222" y="349.4"/><use href="#q2" x="223" y="342.1"/><use href="#q2" x="224" y="340.7"/><use href="#q2" x="225" y="342"/><use href="#q2" x="226" y="355.4"/><use href="#q2" x="227" y="353.1"/><use href="#q2" x="228" y="340.9"/><use href="#q2" x="229" y="349.3"/><use href="#q2" x="230" y="368.3"/><use href="#q2" x="231" y="358.3"/><use href="#q2" x="232" y="343.3"/><use href="#q2" x="233" y="344.1"/><use href="#q2" x="234" y="347.9"/><use href="#q2" x="235" y="332"/><use href="#q2" x="236" y="332"/><use href="#q2" x="237" y="332"/><use href="#q2" x="238" y="332"/><use href="#q2" x="239" y="336.7"/><use href="#q2" x="240" y="332"/><use href="#q2" x="241" y="332"/><use href="#q2" x="242" y="333.2"/><use href="#q2" x="243" y="332"/><use href="#q2" x="244" y="332"/><use href="#q2" x="245" y="332"/><use href="#q2" x="246" y="332"/><use href="#q2" x="247" y="352.1"/><use href="#q2" x="248" y="346.6"/><use href="#q2" x="249" y="355.7"/><use href="#q2" x="250" y="361.4"/><use href="#q2" x="251" y="333"/><use href="#q2" x="252" y="334.6"/><use href="#q2" x="253" y="360.4"/><use href="#q2" x="254" y="339.4"/><use href="#q2" x="255" y="366.5"/><use href="#q2" x="256" y="332"/><use href="#q2" x="257" y="339.4"/><use href="#q2" x="258" y="340.5"/><use href="#q2" x="259" y="344.4"/><use href="#q2" x="260" y="332"/><use href="#q2" x="261" y="354.5"/><use href="#q2" x="262" y="349.4"/><use href="#q2" x="263" y="344.9"/><use href="#q2" x="264" y="344.9"/><use href="#q2" x="265" y="332"/><use href="#q2" x="266" y="341.3"/><use href="#q2" x="267" y="341.9"/><use href="#q2" x="268" y="332"/><use href="#q2" x="269" y="332"/><use href="#q2" x="270" y="332"/><use href="#q2" x="271" y="346.1"/><use href="#q2" x="272" y="332"/><use href="#q2" x="273" y="372.5"/><use href="#q2" x="274" y="353.5"/><use href="#q2" x="275" y="332"/><use href="#q2" x="276" y="332"/><use href="#q2" x="277" y="377.4"/><use href="#q2" x="278" y="346.4"/><use href="#q2" x="279" y="361.7"/><use href="#q2" x="280" y="364.2"/><use href="#q2" x="281" y="341.7"/><use href="#q2" x="282" y="354.4"/><use href="#q2" x="283" y="337.1"/><use href="#q2" x="284" y="332"/><use href="#q2" x="285" y="332"/><use href="#q2" x="286" y="337.3"/><use href="#q2" x="287" y="332"/><use href="#q2" x="288" y="346.7"/><use href="#q2" x="289" y="332"/><use href="#q2" x="290" y="354.7"/><use href="#q2" x="291" y="354.8"/><use href="#q2" x="292" y="332"/><use href="#q2" x="293" y="359.6"/><use href="#q2" x="294" y="347.5"/><use href="#q2" x="295" y="353"/><use href="#q2" x="296" y="346.3"/><use href="#q2" x="297" y="342.2"/><use href="#q2" x="298" y="344.1"/><use href="#q2" x="299" y="346.4"/><use href="#q2" x="300" y="332"/><use href="#q2" x="301" y="348.7"/><use href="#q2" x="302" y="355.4"/><use href="#q2" x="303" y="332"/><use href="#q2" x="304" y="332"/><use href="#q2" x="305" y="336.6"/><use href="#q2" x="306" y="332"/><use href="#q2" x="307" y="350.8"/><use href="#q2" x="308" y="347.3"/><use href="#q2" x="309" y="332"/><use href="#q2" x="310" y="353.1"/><use href="#q2" x="311" y="379.4"/><use href="#q2" x="312" y="374.9"/><use href="#q2" x="313" y="332"/><use href="#q2" x="314" y="332"/><use href="#q2" x="315" y="332"/><use href="#q2" x="316" y="332"/><use href="#q2" x="317" y="334.8"/><use href="#q2" x="318" y="370"/><use href="#q2" x="319" y="383.3"/><use href="#q2" x="320" y="382.3"/><use href="#q2" x="321" y="370.7"/><use href="#q2" x="322" y="368.1"/><use href="#q2" x="323" y="361.9"/><use href="#q2" x="324" y="332"/><use href="#q2" x="325" y="341.3"/><use href="#q2" x="326" y="333.9"/><use href="#q2" x="327" y="332"/><use href="#q2" x="328" y="332"/><use href="#q2" x="329" y="339.3"/><use href="#q2" x="330" y="361.7"/><use href="#q2" x="331" y="345.8"/><use href="#q2" x="332" y="342.4"/><use href="#q2" x="333" y="345.4"/><use href="#q2" x="334" y="344.1"/><use href="#q2" x="335" y="356.2"/><use href="#q2" x="336" y="355.8"/><use href="#q2" x="337" y="332"/><use href="#q2" x="338" y="340.3"/><use href="#q2" x="339" y="332"/><use href="#q2" x="340" y="366.7"/><use href="#q2" x="341" y="338"/><use href="#q2" x="342" y="347.3"/><use href="#q2" x="343" y="335.4"/><use href="#q2" x="344" y="332"/><use href="#q2" x="345" y="355"/><use href="#q2" x="346" y="345.6"/><use href="#q2" x="347" y="357"/><use href="#q2" x="348" y="375.7"/><use href="#q2" x="349" y="364.6"/><use href="#q2" x="350" y="332"/><use href="#q2" x="351" y="332"/><use href="#q2" x="352" y="332"/><use href="#q2" x="353" y="332"/><use href="#q2" x="354" y="370.1"/><use href="#q2" x="355" y="359.5"/><use href="#q2" x="356" y="345.1"/><use href="#q2" x="357" y="332"/><use href="#q2" x="358" y="348"/><use href="#q2" x="359" y="362.4"/><use href="#q2" x="360" y="332"/><use href="#q2" x="361" y="354.9"/><use href="#q2" x="362" y="334.4"/><use href="#q2" x="363" y="336.3"/><use href="#q2" x="364" y="350.4"/><use href="#q2" x="365" y="332"/><use href="#q2" x="366" y="344.7"/><use href="#q2" x="367" y="364.1"/><use href="#q2" x="368" y="347.1"/><use href="#q2" x="369" y="334.8"/><use href="#q2" x="370" y="336.4"/><use href="#q2" x="371" y="345.5"/><use href="#q2" x="372" y="344.3"/><use href="#q2" x="373" y="348.7"/><use href="#q2" x="374" y="355.9"/><use href="#q2" x="375" y="347.9"/><use href="#q2" x="376" y="332"/><use href="#q2" x="377" y="356.4"/><use href="#q2" x="378" y="332"/><use href="#q2" x="379" y="354.8"/><use href="#q2" x="380" y="347.6"/><use href="#q2" x="381" y="332"/><use href="#q2" x="382" y="355"/><use href="#q2" x="383" y="345.9"/><use href="#q2" x="384" y="343.4"/><use href="#q2" x="385" y="335.7"/><use href="#q2" x="386" y="332"/><use href="#q2" x="387" y="344.6"/><use href="#q2" x="388" y="349.3"/><use href="#q2" x="389" y="368.2"/><use href="#q2" x="390" y="377.1"/><use href="#q2" x="391" y="339"/><use href="#q2" x="392" y="350.6"/><use href="#q2" x="393" y="332"/><use href="#q2" x="394" y="346.3"/><use href="#q2" x="395" y="368.9"/><use href="#q2" x="396" y="359.1"/><use href="#q2" x="397" y="365.1"/><use href="#q2" x="398" y="335.6"/><use href="#q2" x="399" y="352.3"/><use href="#q2" x="400" y="332"/><use href="#q2" x="401" y="332"/><use href="#q2" x="402" y="334.6"/><use href="#q2" x="403" y="332"/><use href="#q2" x="404" y="346.9"/><use href="#q2" x="405" y="348.8"/><use href="#q2" x="406" y="336.3"/><use href="#q2" x="407" y="337.5"/><use href="#q2" x="408" y="358.1"/><use href="#q2" x="409" y="357.2"/><use href="#q2" x="410" y="332"/><use href="#q2" x="411" y="340.3"/><use href="#q2" x="412" y="377.9"/><use href="#q2" x="413" y="373.9"/><use href="#q2" x="414" y="363"/><use href="#q2" x="415" y="353.8"/><use href="#q2" x="416" y="336.3"/><use href="#q2" x="417" y="338"/><use href="#q2" x="418" y="355.6"/><use href="#q2" x="419" y="336"/><use href="#q2" x="420" y="332"/><use href="#q2" x="421" y="332"/><use href="#q2" x="422" y="332"/><use href="#q2" x="423" y="332"/><use href="#q2" x="424" y="332"/><use href="#q2" x="425" y="354.2"/><use href="#q2" x="426" y="364"/><use href="#q2" x="427" y="369.3"/><use href="#q2" x="428" y="365.6"/><use href="#q2" x="429" y="373.1"/><use href="#q2" x="430" y="367.5"/><use href="#q2" x="431" y="356.3"/><use href="#q2" x="432" y="332"/><use href="#q2" x="433" y="355.4"/><use href="#q2" x="434" y="332"/><use href="#q2" x="435" y="332"/><use href="#q2" x="436" y="332"/><use href="#q2" x="437" y="332"/><use href="#q2" x="438" y="337.1"/><use href="#q2" x="439" y="333.8"/><use href="#q2" x="440" y="354.7"/><use href="#q2" x="441" y="375.5"/><use href="#q2" x="442" y="371"/><use href="#q2" x="443" y="374.4"/><use href="#q2" x="444" y="359.6"/><use href="#q2" x="445" y="332"/><use href="#q2" x="446" y="334.9"/><use href="#q2" x="447" y="369.6"/><use href="#q2" x="448" y="341"/><use href="#q2" x="449" y="337.6"/><use href="#q2" x="450" y="332"/><use href="#q2" x="451" y="332"/><use href="#q2" x="452" y="332"/><use href="#q2" x="453" y="332"/><use href="#q2" x="454" y="332"/><use href="#q2" x="455" y="332"/><use href="#q2" x="456" y="332"/><use href="#q2" x="457" y="346.9"/><use href="#q2" x="458" y="332"/><use href="#q2" x="459" y="344"/><use href="#q2" x="460" y="344.4"/><use href="#q2" x="461" y="375.6"/><use href="#q2" x="462" y="369.1"/><use href="#q2" x="463" y="341.1"/><use href="#q2" x="464" y="372.5"/><use href="#q2" x="465" y="366.3"/><use href="#q2" x="466" y="349.6"/><use href="#q2" x="467" y="355.7"/><use href="#q2" x="468" y="350.1"/><use href="#q2" x="469" y="332"/><use href="#q2" x="470" y="332"/><use href="#q2" x="471" y="332"/><use href="#q2" x="472" y="337"/><use href="#q2" x="473" y="343.6"/><use href="#q2" x="474" y="353.8"/><use href="#q2" x="475" y="352.9"/><use href="#q2" x="476" y="368.3"/><use href="#q2" x="477" y="378"/><use href="#q2" x="478" y="377.7"/><use href="#q2" x="479" y="356.6"/><use href="#q2" x="480" y="339.1"/><use href="#q2" x="481" y="332"/><use href="#q2" x="482" y="332"/><use href="#q2" x="483" y="333.8"/><use href="#q2" x="484" y="332"/><use href="#q2" x="485" y="338.3"/><use href="#q2" x="486" y="332"/><use href="#q2" x="487" y="346.6"/><use href="#q2" x="488" y="332"/><use href="#q2" x="489" y="332"/><use href="#q2" x="490" y="334.3"/><use href="#q2" x="491" y="342.5"/><use href="#q2" x="492" y="342.5"/><use href="#q2" x="493" y="353.8"/><use href="#q2" x="494" y="341.6"/><use href="#q2" x="495" y="338.2"/><use href="#q2" x="496" y="332"/><use href="#q2" x="497" y="332"/><use href="#q2" x="498" y="354.3"/><use href="#q2" x="499" y="350.5"/><use href="#q2" x="500" y="332"/><use href="#q2" x="501" y="334.6"/><use href="#q2" x="502" y="348.8"/><use href="#q2" x="503" y="364.6"/><use href="#q2" x="504" y="368.7"/><use href="#q2" x="505" y="339.6"/><use href="#q2" x="506" y="359.5"/><use href="#q2" x="507" y="332"/><use href="#q2" x="508" y="332"/><use href="#q2" x="509" y="332"/><use href="#q2" x="510" y="332"/><use href="#q2" x="511" y="332"/><use href="#q2" x="512" y="350.1"/><use href="#q2" x="513" y="370.6"/><use href="#q2" x="514" y="372.3"/><use href="#q2" x="515" y="344.6"/><use href="#q2" x="516" y="368"/><use href="#q2" x="517" y="332.6"/><use href="#q2" x="518" y="369.6"/><use href="#q2" x="519" y="364.9"/><use href="#q2" x="520" y="359.7"/><use href="#q2" x="521" y="336.1"/><use href="#q2" x="522" y="334.6"/><use href="#q2" x="523" y="334.4"/><use href="#q2" x="524" y="332"/><use href="#q2" x="525" y="339.5"/><use href="#q2" x="526" y="351.2"/><use href="#q2" x="527" y="359.1"/><use href="#q2" x="528" y="354.6"/><use href="#q2" x="529" y="359"/><use href="#q2" x="530" y="359.1"/><use href="#q2" x="531" y="340.3"/><use href="#q2" x="532" y="332"/><use href="#q2" x="533" y="332"/><use href="#q2" x="534" y="332"/><use href="#q2" x="535" y="354"/><use href="#q2" x="536" y="374.6"/><use href="#q2" x="537" y="364.8"/><use href="#q2" x="538" y="354.9"/><use href="#q2" x="539" y="359"/><use href="#q2" x="540" y="332"/><use href="#q2" x="541" y="341.3"/><use href="#q2" x="542" y="351.3"/><use href="#q2" x="543" y="332"/><use href="#q2" x="544" y="343"/><use href="#q2" x="545" y="348.9"/><use href="#q2" x="546" y="332"/><use href="#q2" x="547" y="332"/><use href="#q2" x="548" y="332"/><use href="#q2" x="549" y="335.5"/><use href="#q2" x="550" y="339.9"/><use href="#q2" x="551" y="357"/><use href="#q2" x="552" y="337"/><use href="#q2" x="553" y="370.9"/><use href="#q2" x="554" y="332.3"/><use href="#q2" x="555" y="332"/><use href="#q2" x="556" y="332"/><use href="#q2" x="557" y="360.1"/><use href="#q2" x="558" y="357.9"/><use href="#q2" x="559" y="362.5"/><use href="#q2" x="560" y="345.4"/><use href="#q2" x="561" y="332"/><use href="#q2" x="562" y="332"/><use href="#q2" x="563" y="349.4"/><use href="#q2" x="564" y="356.3"/><use href="#q2" x="565" y="350.2"/><use href="#q2" x="566" y="356.6"/><use href="#q2" x="567" y="332"/><use href="#q2" x="568" y="332"/><use href="#q2" x="569" y="353.5"/><use href="#q2" x="570" y="351.3"/><use href="#q2" x="571" y="343"/><use href="#q2" x="572" y="356.2"/><use href="#q2" x="573" y="332"/><use href="#q2" x="574" y="340.8"/><use href="#q2" x="575" y="339"/><use href="#q2" x="576" y="332"/><use href="#q2" x="577" y="332"/><use href="#q2" x="578" y="356.7"/><use href="#q2" x="579" y="362.2"/><use href="#q2" x="580" y="348.8"/><use href="#q2" x="581" y="332"/><use href="#q2" x="582" y="361.9"/><use href="#q2" x="583" y="352.5"/><use href="#q2" x="584" y="332"/><use href="#q2" x="585" y="332"/><use href="#q2" x="586" y="335.5"/><use href="#q2" x="587" y="332"/><use href="#q2" x="588" y="347.4"/><use href="#q2" x="589" y="353"/><use href="#q2" x="590" y="361.8"/><use href="#q2" x="591" y="332"/><use href="#q2" x="592" y="361"/><use href="#q2" x="593" y="353.4"/><use href="#q2" x="594" y="350.8"/><use href="#q2" x="595" y="355.1"/><use href="#q2" x="596" y="337.9"/><use href="#q2" x="597" y="367"/><use href="#q2" x="598" y="339.9"/><use href="#q2" x="599" y="366.1"/><use href="#q2" x="600" y="351.2"/><use href="#q2" x="601" y="338.5"/><use href="#q2" x="602" y="348.2"/><use href="#q2" x="603" y="351.4"/><use href="#q2" x="604" y="337.6"/><use href="#q2" x="605" y="332"/><use href="#q2" x="606" y="343.6"/><use href="#q2" x="607" y="333.6"/><use href="#q2" x="608" y="332"/><use href="#q2" x="609" y="332"/><use href="#q2" x="610" y="335.8"/><use href="#q2" x="611" y="370.6"/><use href="#q2" x="612" y="373.5"/><use href="#q2" x="613" y="332.9"/><use href="#q2" x="614" y="353.2"/><use href="#q2" x="615" y="332"/><use href="#q2" x="616" y="332"/><use href="#q2" x="617" y="335.8"/><use href="#q2" x="618" y="353.8"/><use href="#q2" x="619" y="343.7"/><use href="#q2" x="620" y="332"/><use href="#q2" x="621" y="348.6"/><use href="#q2" x="622" y="352.2"/><use href="#q2" x="623" y="344.7"/><use href="#q2" x="624" y="349.5"/><use href="#q2" x="625" y="332"/><use href="#q2" x="626" y="332"/><use href="#q2" x="627" y="332"/><use href="#q2" x="628" y="351.1"/><use href="#q2" x="629" y="352.1"/><use href="#q2" x="630" y="369.7"/><use href="#q2" x="631" y="332"/><use href="#q2" x="632" y="345.7"/><use href="#q2" x="633" y="358.1"/><use href="#q2" x="634" y="347.4"/><use href="#q2" x="635" y="346.4"/><use href="#q2" x="636" y="349.5"/><use href="#q2" x="637" y="352.1"/><use href="#q2" x="638" y="363.7"/><use href="#q2" x="639" y="332"/><use href="#q2" x="640" y="353.5"/><use href="#q2" x="641" y="339"/><use href="#q2" x="642" y="332"/><use href="#q2" x="643" y="345.8"/><use href="#q2" x="644" y="338.3"/><use href="#q2" x="645" y="358"/><use href="#q2" x="646" y="337.2"/><use href="#q2" x="647" y="332"/><use href="#q2" x="648" y="332"/><use href="#q2" x="649" y="342.7"/><use href="#q2" x="650" y="332"/><use href="#q2" x="651" y="343.9"/><use href="#q2" x="652" y="346.7"/><use href="#q2" x="653" y="351.9"/><use href="#q2" x="654" y="343.2"/><use href="#q2" x="655" y="336.3"/><use href="#q2" x="656" y="332"/><use href="#q2" x="657" y="369"/><use href="#q2" x="658" y="347.4"/><use href="#q2" x="659" y="352.6"/><use href="#q2" x="660" y="340.2"/><use href="#q2" x="661" y="336.3"/><use href="#q2" x="662" y="332"/><use href="#q2" x="663" y="372.5"/><use href="#q2" x="664" y="345.1"/><use href="#q2" x="665" y="337.6"/><use href="#q2" x="666" y="332"/><use href="#q2" x="667" y="332"/><use href="#q2" x="668" y="339.9"/><use href="#q2" x="669" y="348.6"/><use href="#q2" x="670" y="356.9"/><use href="#q2" x="671" y="351.8"/><use href="#q2" x="672" y="332"/><use href="#q2" x="673" y="332"/><use href="#q2" x="674" y="332"/><use href="#q2" x="675" y="350.3"/><use href="#q2" x="676" y="354"/><use href="#q2" x="677" y="332.2"/><use href="#q2" x="678" y="375.2"/><use href="#q2" x="679" y="374.1"/><use href="#q2" x="680" y="361"/><use href="#q2" x="681" y="332"/><use href="#q2" x="682" y="346.6"/><use href="#q2" x="683" y="334.6"/><use href="#q2" x="684" y="361.6"/><use href="#q2" x="685" y="332"/><use href="#q2" x="686" y="360.7"/><use href="#q2" x="687" y="343.7"/><use href="#q2" x="688" y="332"/><use href="#q2" x="689" y="332"/><use href="#q2" x="690" y="337.7"/><use href="#q2" x="691" y="332"/><use href="#q2" x="692" y="332"/><rect x="82" y="332" width="2" height="50" fill="url(#ks2)" opacity="0.6"/><rect x="83" y="332" width="2" height="30" fill="url(#ks2)" opacity="1"/><rect x="89" y="332" width="1" height="70" fill="url(#ks2)" opacity="1"/><rect x="95" y="332" width="2" height="25" fill="url(#ks2)" opacity="0.6"/><rect x="97" y="332" width="1" height="60" fill="url(#ks2)" opacity="1"/><rect x="100" y="332" width="1" height="100" fill="url(#ks2)" opacity="1"/><rect x="103" y="332" width="1" height="110" fill="url(#ks2)" opacity="0.85"/><rect x="108" y="332" width="1" height="45" fill="url(#ks2)" opacity="0.85"/><rect x="112" y="332" width="1" height="25" fill="url(#ks2)" opacity="0.7"/><rect x="118" y="332" width="1" height="25" fill="url(#ks2)" opacity="0.5"/><rect x="121" y="332" width="1" height="45" fill="url(#ks2)" opacity="1"/><rect x="124" y="332" width="2" height="80" fill="url(#ks2)" opacity="0.7"/><rect x="129" y="332" width="2" height="60" fill="url(#ks2)" opacity="0.85"/><rect x="135" y="332" width="1" height="80" fill="url(#ks2)" opacity="0.85"/><rect x="137" y="332" width="1" height="50" fill="url(#ks2)" opacity="1"/><rect x="142" y="332" width="1" height="80" fill="url(#ks2)" opacity="0.7"/><rect x="144" y="332" width="1" height="70" fill="url(#ks2)" opacity="1"/><rect x="148" y="332" width="1" height="55" fill="url(#ks2)" opacity="0.85"/><rect x="155" y="332" width="2" height="50" fill="url(#ks2)" opacity="0.6"/><rect x="160" y="332" width="1" height="65" fill="url(#ks2)" opacity="1"/><rect x="163" y="332" width="2" height="110" fill="url(#ks2)" opacity="1"/><rect x="166" y="332" width="1" height="65" fill="url(#ks2)" opacity="1"/><rect x="169" y="332" width="1" height="45" fill="url(#ks2)" opacity="0.6"/><rect x="174" y="332" width="2" height="90" fill="url(#ks2)" opacity="0.85"/><rect x="177" y="332" width="1" height="70" fill="url(#ks2)" opacity="0.7"/><rect x="184" y="332" width="1" height="40" fill="url(#ks2)" opacity="0.7"/><rect x="187" y="332" width="2" height="30" fill="url(#ks2)" opacity="0.5"/><rect x="190" y="332" width="1" height="100" fill="url(#ks2)" opacity="0.7"/><rect x="196" y="332" width="1" height="60" fill="url(#ks2)" opacity="0.5"/><rect x="198" y="332" width="2" height="100" fill="url(#ks2)" opacity="0.6"/><rect x="205" y="332" width="2" height="80" fill="url(#ks2)" opacity="0.7"/><rect x="208" y="332" width="1" height="30" fill="url(#ks2)" opacity="0.5"/><rect x="212" y="332" width="1" height="100" fill="url(#ks2)" opacity="0.7"/><rect x="215" y="332" width="1" height="90" fill="url(#ks2)" opacity="0.5"/><rect x="219" y="332" width="1" height="110" fill="url(#ks2)" opacity="0.5"/><rect x="222" y="332" width="2" height="45" fill="url(#ks2)" opacity="1"/><rect x="228" y="332" width="1" height="30" fill="url(#ks2)" opacity="0.5"/><rect x="231" y="332" width="1" height="25" fill="url(#ks2)" opacity="0.7"/><rect x="235" y="332" width="1" height="90" fill="url(#ks2)" opacity="0.7"/><rect x="241" y="332" width="2" height="65" fill="url(#ks2)" opacity="0.7"/><rect x="246" y="332" width="1" height="55" fill="url(#ks2)" opacity="0.85"/><rect x="246" y="332" width="1" height="65" fill="url(#ks2)" opacity="1"/><rect x="254" y="332" width="1" height="55" fill="url(#ks2)" opacity="0.6"/><rect x="255" y="332" width="1" height="110" fill="url(#ks2)" opacity="0.6"/><rect x="259" y="332" width="1" height="50" fill="url(#ks2)" opacity="0.6"/><rect x="264" y="332" width="2" height="70" fill="url(#ks2)" opacity="1"/><rect x="268" y="332" width="1" height="70" fill="url(#ks2)" opacity="0.6"/><rect x="273" y="332" width="2" height="70" fill="url(#ks2)" opacity="0.5"/><rect x="276" y="332" width="1" height="70" fill="url(#ks2)" opacity="0.6"/><rect x="281" y="332" width="1" height="65" fill="url(#ks2)" opacity="0.6"/><rect x="285" y="332" width="1" height="65" fill="url(#ks2)" opacity="0.85"/><rect x="290" y="332" width="1" height="65" fill="url(#ks2)" opacity="1"/><rect x="294" y="332" width="1" height="30" fill="url(#ks2)" opacity="0.6"/><rect x="298" y="332" width="1" height="70" fill="url(#ks2)" opacity="0.5"/><rect x="303" y="332" width="1" height="70" fill="url(#ks2)" opacity="1"/><rect x="307" y="332" width="2" height="45" fill="url(#ks2)" opacity="0.6"/><rect x="310" y="332" width="1" height="80" fill="url(#ks2)" opacity="0.6"/><rect x="312" y="332" width="1" height="50" fill="url(#ks2)" opacity="0.7"/><rect x="318" y="332" width="1" height="25" fill="url(#ks2)" opacity="0.5"/><rect x="323" y="332" width="2" height="80" fill="url(#ks2)" opacity="0.7"/><rect x="326" y="332" width="1" height="70" fill="url(#ks2)" opacity="1"/><rect x="330" y="332" width="1" height="25" fill="url(#ks2)" opacity="1"/><rect x="334" y="332" width="1" height="25" fill="url(#ks2)" opacity="0.85"/><rect x="339" y="332" width="1" height="30" fill="url(#ks2)" opacity="0.6"/><rect x="343" y="332" width="1" height="40" fill="url(#ks2)" opacity="0.7"/><rect x="345" y="332" width="1" height="30" fill="url(#ks2)" opacity="0.6"/><rect x="349" y="332" width="1" height="60" fill="url(#ks2)" opacity="0.5"/><rect x="354" y="332" width="2" height="110" fill="url(#ks2)" opacity="0.85"/><rect x="360" y="332" width="2" height="50" fill="url(#ks2)" opacity="1"/><rect x="364" y="332" width="1" height="100" fill="url(#ks2)" opacity="0.6"/><rect x="368" y="332" width="1" height="100" fill="url(#ks2)" opacity="0.85"/><rect x="372" y="332" width="2" height="40" fill="url(#ks2)" opacity="0.7"/><rect x="374" y="332" width="1" height="45" fill="url(#ks2)" opacity="1"/><rect x="378" y="332" width="2" height="90" fill="url(#ks2)" opacity="0.5"/><rect x="383" y="332" width="1" height="65" fill="url(#ks2)" opacity="0.7"/><rect x="389" y="332" width="1" height="45" fill="url(#ks2)" opacity="0.6"/><rect x="393" y="332" width="2" height="45" fill="url(#ks2)" opacity="0.5"/><rect x="397" y="332" width="1" height="45" fill="url(#ks2)" opacity="0.85"/><rect x="399" y="332" width="1" height="50" fill="url(#ks2)" opacity="0.6"/><rect x="403" y="332" width="1" height="50" fill="url(#ks2)" opacity="1"/><rect x="408" y="332" width="1" height="70" fill="url(#ks2)" opacity="0.85"/><rect x="412" y="332" width="1" height="55" fill="url(#ks2)" opacity="0.6"/><rect x="416" y="332" width="1" height="45" fill="url(#ks2)" opacity="0.7"/><rect x="419" y="332" width="1" height="90" fill="url(#ks2)" opacity="0.7"/><rect x="423" y="332" width="1" height="65" fill="url(#ks2)" opacity="0.5"/><rect x="429" y="332" width="1" height="110" fill="url(#ks2)" opacity="0.6"/><rect x="433" y="332" width="1" height="55" fill="url(#ks2)" opacity="0.6"/><rect x="437" y="332" width="1" height="90" fill="url(#ks2)" opacity="0.7"/><rect x="442" y="332" width="1" height="80" fill="url(#ks2)" opacity="0.6"/><rect x="446" y="332" width="1" height="40" fill="url(#ks2)" opacity="0.5"/><rect x="448" y="332" width="1" height="40" fill="url(#ks2)" opacity="0.85"/><rect x="453" y="332" width="1" height="90" fill="url(#ks2)" opacity="0.6"/><rect x="456" y="332" width="1" height="40" fill="url(#ks2)" opacity="0.85"/><rect x="462" y="332" width="1" height="90" fill="url(#ks2)" opacity="0.7"/><rect x="465" y="332" width="1" height="100" fill="url(#ks2)" opacity="0.85"/><rect x="468" y="332" width="1" height="40" fill="url(#ks2)" opacity="0.5"/><rect x="473" y="332" width="1" height="110" fill="url(#ks2)" opacity="0.7"/><rect x="477" y="332" width="2" height="30" fill="url(#ks2)" opacity="0.6"/><rect x="483" y="332" width="1" height="100" fill="url(#ks2)" opacity="1"/><rect x="487" y="332" width="1" height="30" fill="url(#ks2)" opacity="0.6"/><rect x="488" y="332" width="1" height="50" fill="url(#ks2)" opacity="0.6"/><rect x="495" y="332" width="1" height="110" fill="url(#ks2)" opacity="1"/><rect x="499" y="332" width="1" height="55" fill="url(#ks2)" opacity="0.7"/><rect x="501" y="332" width="2" height="60" fill="url(#ks2)" opacity="0.7"/><rect x="507" y="332" width="1" height="50" fill="url(#ks2)" opacity="0.5"/><rect x="512" y="332" width="1" height="70" fill="url(#ks2)" opacity="1"/><rect x="513" y="332" width="1" height="30" fill="url(#ks2)" opacity="0.6"/><rect x="519" y="332" width="1" height="40" fill="url(#ks2)" opacity="1"/><rect x="523" y="332" width="1" height="60" fill="url(#ks2)" opacity="0.7"/><rect x="525" y="332" width="2" height="70" fill="url(#ks2)" opacity="0.6"/><rect x="530" y="332" width="1" height="90" fill="url(#ks2)" opacity="0.85"/><rect x="535" y="332" width="2" height="50" fill="url(#ks2)" opacity="0.6"/><rect x="537" y="332" width="1" height="80" fill="url(#ks2)" opacity="1"/><rect x="544" y="332" width="1" height="70" fill="url(#ks2)" opacity="0.5"/><rect x="547" y="332" width="2" height="110" fill="url(#ks2)" opacity="0.5"/><rect x="550" y="332" width="2" height="30" fill="url(#ks2)" opacity="0.85"/><rect x="553" y="332" width="1" height="100" fill="url(#ks2)" opacity="0.7"/><rect x="560" y="332" width="1" height="40" fill="url(#ks2)" opacity="0.7"/><rect x="562" y="332" width="2" height="45" fill="url(#ks2)" opacity="0.85"/><rect x="567" y="332" width="1" height="70" fill="url(#ks2)" opacity="0.6"/><rect x="572" y="332" width="1" height="80" fill="url(#ks2)" opacity="0.85"/><rect x="576" y="332" width="1" height="100" fill="url(#ks2)" opacity="0.5"/><rect x="580" y="332" width="1" height="45" fill="url(#ks2)" opacity="0.6"/><rect x="586" y="332" width="2" height="90" fill="url(#ks2)" opacity="0.6"/><rect x="586" y="332" width="1" height="40" fill="url(#ks2)" opacity="0.7"/><rect x="590" y="332" width="1" height="65" fill="url(#ks2)" opacity="0.5"/><rect x="594" y="332" width="1" height="50" fill="url(#ks2)" opacity="0.6"/><rect x="599" y="332" width="1" height="70" fill="url(#ks2)" opacity="0.6"/><rect x="604" y="332" width="1" height="45" fill="url(#ks2)" opacity="0.5"/><rect x="608" y="332" width="2" height="100" fill="url(#ks2)" opacity="0.6"/><rect x="614" y="332" width="1" height="65" fill="url(#ks2)" opacity="0.6"/><rect x="617" y="332" width="2" height="40" fill="url(#ks2)" opacity="0.5"/><rect x="622" y="332" width="1" height="50" fill="url(#ks2)" opacity="0.85"/><rect x="623" y="332" width="1" height="25" fill="url(#ks2)" opacity="0.5"/><rect x="628" y="332" width="1" height="90" fill="url(#ks2)" opacity="0.7"/><rect x="633" y="332" width="1" height="30" fill="url(#ks2)" opacity="0.85"/><rect x="638" y="332" width="1" height="80" fill="url(#ks2)" opacity="0.5"/><rect x="642" y="332" width="1" height="60" fill="url(#ks2)" opacity="0.5"/><rect x="646" y="332" width="1" height="90" fill="url(#ks2)" opacity="0.5"/><rect x="649" y="332" width="1" height="25" fill="url(#ks2)" opacity="0.6"/><rect x="652" y="332" width="1" height="90" fill="url(#ks2)" opacity="0.7"/><rect x="657" y="332" width="2" height="55" fill="url(#ks2)" opacity="0.85"/><rect x="663" y="332" width="1" height="100" fill="url(#ks2)" opacity="1"/><rect x="665" y="332" width="1" height="60" fill="url(#ks2)" opacity="1"/><rect x="670" y="332" width="1" height="80" fill="url(#ks2)" opacity="1"/><rect x="673" y="332" width="2" height="90" fill="url(#ks2)" opacity="0.7"/><rect x="676" y="332" width="1" height="45" fill="url(#ks2)" opacity="0.6"/><rect x="684" y="332" width="2" height="110" fill="url(#ks2)" opacity="0.7"/><rect x="685" y="332" width="1" height="70" fill="url(#ks2)" opacity="0.7"/><rect x="690" y="332" width="1" height="25" fill="url(#ks2)" opacity="0.5"/></g></g><g clip-path="url(#c2l)"><g filter="url(#cmB2)"><rect x="77.0" y="389" width="617.5" height="1" fill="#2b2b2b"/><rect x="77.0" y="390" width="617.5" height="3.6" fill="#212121"/><rect x="77.0" y="393.6" width="617.5" height="2.9" fill="#383838"/><rect x="77.0" y="396.5" width="617.5" height="11.5" fill="#212121"/><rect x="77.0" y="408" width="617.5" height="1.5" fill="#262626"/><rect x="77.0" y="409.5" width="617.5" height="5.9" fill="#404040"/><rect x="77.0" y="415.4" width="617.5" height="8" fill="#2b2b2b"/><rect x="77.0" y="423.4" width="617.5" height="3.6" fill="#3b3b3b"/><rect x="77.0" y="427" width="617.5" height="5.5" fill="#333333"/><rect x="77.0" y="432.5" width="617.5" height="2.5" fill="#1f1f1f"/><rect x="77.0" y="435" width="617.5" height="4.2" fill="#595959"/><rect x="77.0" y="439.2" width="617.5" height="2.8" fill="#424242"/><rect x="77.0" y="442" width="617.5" height="2.2" fill="#525252"/><rect x="77.0" y="444.2" width="617.5" height="7.8" fill="#363636"/><rect x="77.0" y="452" width="617.5" height="2.3" fill="#474747"/><rect x="77.0" y="454.3" width="617.5" height="2.2" fill="#949494"/><rect x="77.0" y="456.5" width="617.5" height="1.5" fill="#737373"/><rect x="77.0" y="458" width="617.5" height="1" fill="#333333"/><rect x="77.0" y="459" width="617.5" height="2" fill="#7d7d7d"/><rect x="77.0" y="461" width="617.5" height="11.3" fill="#575757"/><rect x="77.0" y="472.3" width="617.5" height="2.9" fill="#4c4c4c"/><rect x="77.0" y="475.2" width="617.5" height="2.8" fill="#878787"/><rect x="77.0" y="478" width="617.5" height="1.5" fill="#737373"/><rect x="77.0" y="479.5" width="617.5" height="1.5" fill="#4a4a4a"/><rect x="77.0" y="481" width="617.5" height="1" fill="#737373"/><rect x="77.0" y="482" width="617.5" height="1.8" fill="#6e6e6e"/><rect x="77.0" y="483.8" width="617.5" height="1.5" fill="#000000"/><rect x="77.0" y="485.3" width="617.5" height="1" fill="#6e6e6e"/><rect x="77.0" y="486.3" width="617.5" height="1.1" fill="#000000"/><rect x="77.0" y="487.4" width="617.5" height="7.6" fill="#808080"/><rect x="82" y="332" width="2" height="50" fill="url(#ks2)" opacity="0.6"/><rect x="83" y="332" width="2" height="30" fill="url(#ks2)" opacity="1"/><rect x="89" y="332" width="1" height="70" fill="url(#ks2)" opacity="1"/><rect x="95" y="332" width="2" height="25" fill="url(#ks2)" opacity="0.6"/><rect x="97" y="332" width="1" height="60" fill="url(#ks2)" opacity="1"/><rect x="100" y="332" width="1" height="100" fill="url(#ks2)" opacity="1"/><rect x="103" y="332" width="1" height="110" fill="url(#ks2)" opacity="0.85"/><rect x="108" y="332" width="1" height="45" fill="url(#ks2)" opacity="0.85"/><rect x="112" y="332" width="1" height="25" fill="url(#ks2)" opacity="0.7"/><rect x="118" y="332" width="1" height="25" fill="url(#ks2)" opacity="0.5"/><rect x="121" y="332" width="1" height="45" fill="url(#ks2)" opacity="1"/><rect x="124" y="332" width="2" height="80" fill="url(#ks2)" opacity="0.7"/><rect x="129" y="332" width="2" height="60" fill="url(#ks2)" opacity="0.85"/><rect x="135" y="332" width="1" height="80" fill="url(#ks2)" opacity="0.85"/><rect x="137" y="332" width="1" height="50" fill="url(#ks2)" opacity="1"/><rect x="142" y="332" width="1" height="80" fill="url(#ks2)" opacity="0.7"/><rect x="144" y="332" width="1" height="70" fill="url(#ks2)" opacity="1"/><rect x="148" y="332" width="1" height="55" fill="url(#ks2)" opacity="0.85"/><rect x="155" y="332" width="2" height="50" fill="url(#ks2)" opacity="0.6"/><rect x="160" y="332" width="1" height="65" fill="url(#ks2)" opacity="1"/><rect x="163" y="332" width="2" height="110" fill="url(#ks2)" opacity="1"/><rect x="166" y="332" width="1" height="65" fill="url(#ks2)" opacity="1"/><rect x="169" y="332" width="1" height="45" fill="url(#ks2)" opacity="0.6"/><rect x="174" y="332" width="2" height="90" fill="url(#ks2)" opacity="0.85"/><rect x="177" y="332" width="1" height="70" fill="url(#ks2)" opacity="0.7"/><rect x="184" y="332" width="1" height="40" fill="url(#ks2)" opacity="0.7"/><rect x="187" y="332" width="2" height="30" fill="url(#ks2)" opacity="0.5"/><rect x="190" y="332" width="1" height="100" fill="url(#ks2)" opacity="0.7"/><rect x="196" y="332" width="1" height="60" fill="url(#ks2)" opacity="0.5"/><rect x="198" y="332" width="2" height="100" fill="url(#ks2)" opacity="0.6"/><rect x="205" y="332" width="2" height="80" fill="url(#ks2)" opacity="0.7"/><rect x="208" y="332" width="1" height="30" fill="url(#ks2)" opacity="0.5"/><rect x="212" y="332" width="1" height="100" fill="url(#ks2)" opacity="0.7"/><rect x="215" y="332" width="1" height="90" fill="url(#ks2)" opacity="0.5"/><rect x="219" y="332" width="1" height="110" fill="url(#ks2)" opacity="0.5"/><rect x="222" y="332" width="2" height="45" fill="url(#ks2)" opacity="1"/><rect x="228" y="332" width="1" height="30" fill="url(#ks2)" opacity="0.5"/><rect x="231" y="332" width="1" height="25" fill="url(#ks2)" opacity="0.7"/><rect x="235" y="332" width="1" height="90" fill="url(#ks2)" opacity="0.7"/><rect x="241" y="332" width="2" height="65" fill="url(#ks2)" opacity="0.7"/><rect x="246" y="332" width="1" height="55" fill="url(#ks2)" opacity="0.85"/><rect x="246" y="332" width="1" height="65" fill="url(#ks2)" opacity="1"/><rect x="254" y="332" width="1" height="55" fill="url(#ks2)" opacity="0.6"/><rect x="255" y="332" width="1" height="110" fill="url(#ks2)" opacity="0.6"/><rect x="259" y="332" width="1" height="50" fill="url(#ks2)" opacity="0.6"/><rect x="264" y="332" width="2" height="70" fill="url(#ks2)" opacity="1"/><rect x="268" y="332" width="1" height="70" fill="url(#ks2)" opacity="0.6"/><rect x="273" y="332" width="2" height="70" fill="url(#ks2)" opacity="0.5"/><rect x="276" y="332" width="1" height="70" fill="url(#ks2)" opacity="0.6"/><rect x="281" y="332" width="1" height="65" fill="url(#ks2)" opacity="0.6"/><rect x="285" y="332" width="1" height="65" fill="url(#ks2)" opacity="0.85"/><rect x="290" y="332" width="1" height="65" fill="url(#ks2)" opacity="1"/><rect x="294" y="332" width="1" height="30" fill="url(#ks2)" opacity="0.6"/><rect x="298" y="332" width="1" height="70" fill="url(#ks2)" opacity="0.5"/><rect x="303" y="332" width="1" height="70" fill="url(#ks2)" opacity="1"/><rect x="307" y="332" width="2" height="45" fill="url(#ks2)" opacity="0.6"/><rect x="310" y="332" width="1" height="80" fill="url(#ks2)" opacity="0.6"/><rect x="312" y="332" width="1" height="50" fill="url(#ks2)" opacity="0.7"/><rect x="318" y="332" width="1" height="25" fill="url(#ks2)" opacity="0.5"/><rect x="323" y="332" width="2" height="80" fill="url(#ks2)" opacity="0.7"/><rect x="326" y="332" width="1" height="70" fill="url(#ks2)" opacity="1"/><rect x="330" y="332" width="1" height="25" fill="url(#ks2)" opacity="1"/><rect x="334" y="332" width="1" height="25" fill="url(#ks2)" opacity="0.85"/><rect x="339" y="332" width="1" height="30" fill="url(#ks2)" opacity="0.6"/><rect x="343" y="332" width="1" height="40" fill="url(#ks2)" opacity="0.7"/><rect x="345" y="332" width="1" height="30" fill="url(#ks2)" opacity="0.6"/><rect x="349" y="332" width="1" height="60" fill="url(#ks2)" opacity="0.5"/><rect x="354" y="332" width="2" height="110" fill="url(#ks2)" opacity="0.85"/><rect x="360" y="332" width="2" height="50" fill="url(#ks2)" opacity="1"/><rect x="364" y="332" width="1" height="100" fill="url(#ks2)" opacity="0.6"/><rect x="368" y="332" width="1" height="100" fill="url(#ks2)" opacity="0.85"/><rect x="372" y="332" width="2" height="40" fill="url(#ks2)" opacity="0.7"/><rect x="374" y="332" width="1" height="45" fill="url(#ks2)" opacity="1"/><rect x="378" y="332" width="2" height="90" fill="url(#ks2)" opacity="0.5"/><rect x="383" y="332" width="1" height="65" fill="url(#ks2)" opacity="0.7"/><rect x="389" y="332" width="1" height="45" fill="url(#ks2)" opacity="0.6"/><rect x="393" y="332" width="2" height="45" fill="url(#ks2)" opacity="0.5"/><rect x="397" y="332" width="1" height="45" fill="url(#ks2)" opacity="0.85"/><rect x="399" y="332" width="1" height="50" fill="url(#ks2)" opacity="0.6"/><rect x="403" y="332" width="1" height="50" fill="url(#ks2)" opacity="1"/><rect x="408" y="332" width="1" height="70" fill="url(#ks2)" opacity="0.85"/><rect x="412" y="332" width="1" height="55" fill="url(#ks2)" opacity="0.6"/><rect x="416" y="332" width="1" height="45" fill="url(#ks2)" opacity="0.7"/><rect x="419" y="332" width="1" height="90" fill="url(#ks2)" opacity="0.7"/><rect x="423" y="332" width="1" height="65" fill="url(#ks2)" opacity="0.5"/><rect x="429" y="332" width="1" height="110" fill="url(#ks2)" opacity="0.6"/><rect x="433" y="332" width="1" height="55" fill="url(#ks2)" opacity="0.6"/><rect x="437" y="332" width="1" height="90" fill="url(#ks2)" opacity="0.7"/><rect x="442" y="332" width="1" height="80" fill="url(#ks2)" opacity="0.6"/><rect x="446" y="332" width="1" height="40" fill="url(#ks2)" opacity="0.5"/><rect x="448" y="332" width="1" height="40" fill="url(#ks2)" opacity="0.85"/><rect x="453" y="332" width="1" height="90" fill="url(#ks2)" opacity="0.6"/><rect x="456" y="332" width="1" height="40" fill="url(#ks2)" opacity="0.85"/><rect x="462" y="332" width="1" height="90" fill="url(#ks2)" opacity="0.7"/><rect x="465" y="332" width="1" height="100" fill="url(#ks2)" opacity="0.85"/><rect x="468" y="332" width="1" height="40" fill="url(#ks2)" opacity="0.5"/><rect x="473" y="332" width="1" height="110" fill="url(#ks2)" opacity="0.7"/><rect x="477" y="332" width="2" height="30" fill="url(#ks2)" opacity="0.6"/><rect x="483" y="332" width="1" height="100" fill="url(#ks2)" opacity="1"/><rect x="487" y="332" width="1" height="30" fill="url(#ks2)" opacity="0.6"/><rect x="488" y="332" width="1" height="50" fill="url(#ks2)" opacity="0.6"/><rect x="495" y="332" width="1" height="110" fill="url(#ks2)" opacity="1"/><rect x="499" y="332" width="1" height="55" fill="url(#ks2)" opacity="0.7"/><rect x="501" y="332" width="2" height="60" fill="url(#ks2)" opacity="0.7"/><rect x="507" y="332" width="1" height="50" fill="url(#ks2)" opacity="0.5"/><rect x="512" y="332" width="1" height="70" fill="url(#ks2)" opacity="1"/><rect x="513" y="332" width="1" height="30" fill="url(#ks2)" opacity="0.6"/><rect x="519" y="332" width="1" height="40" fill="url(#ks2)" opacity="1"/><rect x="523" y="332" width="1" height="60" fill="url(#ks2)" opacity="0.7"/><rect x="525" y="332" width="2" height="70" fill="url(#ks2)" opacity="0.6"/><rect x="530" y="332" width="1" height="90" fill="url(#ks2)" opacity="0.85"/><rect x="535" y="332" width="2" height="50" fill="url(#ks2)" opacity="0.6"/><rect x="537" y="332" width="1" height="80" fill="url(#ks2)" opacity="1"/><rect x="544" y="332" width="1" height="70" fill="url(#ks2)" opacity="0.5"/><rect x="547" y="332" width="2" height="110" fill="url(#ks2)" opacity="0.5"/><rect x="550" y="332" width="2" height="30" fill="url(#ks2)" opacity="0.85"/><rect x="553" y="332" width="1" height="100" fill="url(#ks2)" opacity="0.7"/><rect x="560" y="332" width="1" height="40" fill="url(#ks2)" opacity="0.7"/><rect x="562" y="332" width="2" height="45" fill="url(#ks2)" opacity="0.85"/><rect x="567" y="332" width="1" height="70" fill="url(#ks2)" opacity="0.6"/><rect x="572" y="332" width="1" height="80" fill="url(#ks2)" opacity="0.85"/><rect x="576" y="332" width="1" height="100" fill="url(#ks2)" opacity="0.5"/><rect x="580" y="332" width="1" height="45" fill="url(#ks2)" opacity="0.6"/><rect x="586" y="332" width="2" height="90" fill="url(#ks2)" opacity="0.6"/><rect x="586" y="332" width="1" height="40" fill="url(#ks2)" opacity="0.7"/><rect x="590" y="332" width="1" height="65" fill="url(#ks2)" opacity="0.5"/><rect x="594" y="332" width="1" height="50" fill="url(#ks2)" opacity="0.6"/><rect x="599" y="332" width="1" height="70" fill="url(#ks2)" opacity="0.6"/><rect x="604" y="332" width="1" height="45" fill="url(#ks2)" opacity="0.5"/><rect x="608" y="332" width="2" height="100" fill="url(#ks2)" opacity="0.6"/><rect x="614" y="332" width="1" height="65" fill="url(#ks2)" opacity="0.6"/><rect x="617" y="332" width="2" height="40" fill="url(#ks2)" opacity="0.5"/><rect x="622" y="332" width="1" height="50" fill="url(#ks2)" opacity="0.85"/><rect x="623" y="332" width="1" height="25" fill="url(#ks2)" opacity="0.5"/><rect x="628" y="332" width="1" height="90" fill="url(#ks2)" opacity="0.7"/><rect x="633" y="332" width="1" height="30" fill="url(#ks2)" opacity="0.85"/><rect x="638" y="332" width="1" height="80" fill="url(#ks2)" opacity="0.5"/><rect x="642" y="332" width="1" height="60" fill="url(#ks2)" opacity="0.5"/><rect x="646" y="332" width="1" height="90" fill="url(#ks2)" opacity="0.5"/><rect x="649" y="332" width="1" height="25" fill="url(#ks2)" opacity="0.6"/><rect x="652" y="332" width="1" height="90" fill="url(#ks2)" opacity="0.7"/><rect x="657" y="332" width="2" height="55" fill="url(#ks2)" opacity="0.85"/><rect x="663" y="332" width="1" height="100" fill="url(#ks2)" opacity="1"/><rect x="665" y="332" width="1" height="60" fill="url(#ks2)" opacity="1"/><rect x="670" y="332" width="1" height="80" fill="url(#ks2)" opacity="1"/><rect x="673" y="332" width="2" height="90" fill="url(#ks2)" opacity="0.7"/><rect x="676" y="332" width="1" height="45" fill="url(#ks2)" opacity="0.6"/><rect x="684" y="332" width="2" height="110" fill="url(#ks2)" opacity="0.7"/><rect x="685" y="332" width="1" height="70" fill="url(#ks2)" opacity="0.7"/><rect x="690" y="332" width="1" height="25" fill="url(#ks2)" opacity="0.5"/></g></g><g clip-path="url(#c2)"><rect x="334.5" y="454.5" width="64.5" height="1.9" fill="#ff6000" opacity="0.7"/><rect x="334.5" y="456.4" width="64.5" height="3.6" fill="#a8b878" opacity="0.6"/><rect x="334.5" y="460" width="64.5" height="3" fill="#a0a8c0" opacity="0.5"/><rect x="79" y="458" width="613.5" height="1" fill="#408040" opacity="0.7"/><rect x="79" y="472.3" width="613.5" height="2.9" fill="#606030" opacity="0.6"/><rect x="79" y="478" width="613.5" height="1.5" fill="#a0ffa0" opacity="0.6"/><rect x="79" y="481" width="613.5" height="1" fill="#a0ffa0" opacity="0.6"/><rect x="79" y="487" width="613.5" height="1" fill="#c08080" opacity="1"/><rect x="692" y="332" width="1" height="156" fill="#000018"/></g><path d="M79 140.2L79.8 140.8L80.5 143.4L81.2 138.2L82 142.9L82.8 138.3L83.5 144.8L84.2 141.5L85 144.2L85.8 140.6L86.5 143L87.2 141.3L88 141.1L88.8 142.5L89.5 140L90.2 142.1L91 143L91.8 141.8L92.5 141.5L93.2 145.5L94 141.1L94.8 141.4L95.5 142.5L96.2 141.1L97 141.7L97.8 141.6L98.5 145.2L99.2 141.1L100 142.6L100.8 142.9L101.5 144.8L102.2 140.9L103 141.5L103.8 146L104.5 138.7L105.2 142.5L106 143L106.8 145.3L107.5 139.7L108.2 139.2L109 144L109.8 140.8L110.5 141.9L111.2 142.9L112 142.2L112.8 142.5L113.5 141.4L114.2 144.3L115 143.8L115.8 141.7L116.5 141.6L117.2 143.4L118 142.5L118.8 140.5L119.5 142L120.2 143.8L121 141.6L121.8 141.9L122.5 142.6L123.2 142L124 142.3L124.8 139.3L125.5 145.7L126.2 141.5L127 141.1L127.8 144L128.5 142.2L129.2 142.3L130 143.8L130.8 145.2L131.5 142.2L132.2 144.6L133 144.8L133.8 140L134.5 142.2L135.2 143.5L136 139.3L136.8 142.7L137.5 144.1L138.2 143.3L139 142.8L139.8 139.3L140.5 146.3L141.2 141.8L142 143.6L142.8 142.6L143.5 139.6L144.2 140.9L145 140.9L145.8 145.6L146.5 140.1L147.2 142.6L148 141.8L148.8 143.3L149.5 142.8L150.2 142.6L151 140.3L151.8 138.3L152.5 143.8L153.2 142.3L154 144.2L154.8 141.6L155.5 141.6L156.2 143.1L157 139.7L157.8 141.5L158.5 141L159.2 143.1L160 145.2L160.8 142.6L161.5 143.9L162.2 142.2L163 142.8L163.8 141.5L164.5 142.1L165.2 138.7L166 141.6L166.8 140.6L167.5 144.1L168.2 142.8L169 143.9L169.8 144.1L170.5 141.3L171.2 144.2L172 144.6L172.8 141.6L173.5 144.1L174.2 141.5L175 140.1L175.8 143.1L176.5 140.8L177.2 142.9L178 141.4L178.8 143L179.5 138.8L180.2 146.3L181 143.1L181.8 141.5L182.5 141.1L183.2 142.6L184 143.2L184.8 142.6L185.5 142.8L186.2 139.2L187 141.5L187.8 144.5L188.5 141.9L189.2 140.1L190 141.6L190.8 140.3L191.5 141.3L192.2 144.3L193 141.3L193.8 144.2L194.5 141.9L195.2 140L196 141.9L196.8 145.8L197.5 140L198.2 141.3L199 144.4L199.8 141.7L200.5 142.4L201.2 144.4L202 138.9L202.8 143.9L203.5 140.1L204.2 140.7L205 141.4L205.8 144.2L206.5 141.4L207.2 139.6L208 141.3L208.8 144.8L209.5 143L210.2 140.3L211 146.2L211.8 140.3L212.5 140.9L213.2 142.4L214 143.6L214.8 144.2L215.5 143.1L216.2 141.2L217 141.6L217.8 140.1L218.5 142.7L219.2 141.1L220 142.9L220.8 140L221.5 142L222.2 140.9L223 140.7L223.8 140.8L224.5 141L225.2 140.7L226 143.5L226.8 141.9L227.5 140.2L228.2 143.5L229 142.2L229.8 144.4L230.5 141.2L231.2 142.1L232 141.1L232.8 142.6L233.5 142.7L234.2 142.2L235 141.7L235.8 143.1L236.5 142L237.2 142.5L238 140.6L238.8 142.9L239.5 140.3L240.2 141.3L241 142.6L241.8 145.2L242.5 142.7L243.2 141.9L244 141.9L244.8 143.7L245.5 143.7L246.2 143.5L247 141.4L247.8 142.6L248.5 141.4L249.2 141.8L250 140.8L250.8 142.1L251.5 138.8L252.2 141.2L253 143L253.8 140.4L254.5 143.4L255.2 139.7L256 142.2L256.8 142.6L257.5 140.3L258.2 141.5L259 146L259.8 139.8L260.5 141.6L261.2 141.3L262 142.3L262.8 141.9L263.5 143.6L264.2 142.8L265 141.2L265.8 141.7L266.5 140L267.2 140.4L268 141.4L268.8 143.3L269.5 141.8L270.2 143.3L271 143.1L271.8 141.5L272.5 145.4L273.2 140.2L274 141.6L274.8 141.5L275.5 143.9L276.2 141.2L277 141.1L277.8 143L278.5 143.5L279.2 141.4L280 141.8L280.8 143.7L281.5 143L282.2 143.2L283 140.5L283.8 142.9L284.5 142.3L285.2 139.2L286 144.7L286.8 141.4L287.5 141.7L288.2 145.6L289 141.2L289.8 141.2L290.5 142.2L291.2 142.8L292 143L292.8 141.6L293.5 140.8L294.2 141.3L295 141L295.8 140.7L296.5 142.4L297.2 141.1L298 142.3L298.8 140.6L299.5 141.1L300.2 142L301 141.5L301.8 143.9L302.5 140L303.2 142.9L304 141.7L304.8 140.1L305.5 143.7L306.2 141.7L307 138.9L307.8 143.9L308.5 142.9L309.2 140.5L310 145L310.8 141.3L311.5 140.4L312.2 143.3L313 141L313.8 140.2L314.5 139.2L315.2 143.2L316 140.5L316.8 143.4L317.5 142.1L318.2 141.1L319 141.4L319.8 144.8L320.5 143.7L321.2 142.6L322 141.2L322.8 140.7L323.5 141.7L324.2 144.5L325 141.9L325.8 141.5L326.5 140.2L327.2 142.7L328 140.3L328.8 142.4L329.5 142.9L330.2 143.2L331 141.7L331.8 141.4L332.5 142.4L333.2 144.5L334 141.7L334.8 139.8L335.5 144.9L336.2 141.4L337 145.9L337.8 139.5L338.5 142.4L339.2 141.2L340 142.6L340.8 140.7L341.5 139.9L342.2 139.5L343 142.3L343.8 140.9L344.5 141.2L345.2 145.2L346 142L346.8 143.4L347.5 140.5L348.2 142.6L349 141.2L349.8 141.6L350.5 143L351.2 142.3L352 142.1L352.8 141.9L353.5 139.5L354.2 141.3L355 142.5L355.8 141L356.5 140.8L357.2 142.5L358 140.1L358.8 141.2L359.5 143.2L360.2 140.7L361 144.2L361.8 141.7L362.5 142.9L363.2 143L364 138L364.8 142.7L365.5 139.4L366.2 141.6L367 141.5L367.8 143.6L368.5 141L369.2 144.3L370 140L370.8 142L371.5 141.6L372.2 143L373 141.1L373.8 140.8L374.5 141.3L375.2 139.5L376 144.1L376.8 142L377.5 142.1L378.2 141.8L379 140.6L379.8 141.2L380.5 142.9L381.2 140L382 140.8L382.8 144.1L383.5 143.1L384.2 141.5L385 142.3L385.8 141.6L386.5 143.7L387.2 140.2L388 142L388.8 142.1L389.5 143.5L390.2 140.5L391 142.1L391.8 140.5L392.5 140.8L393.2 140.7L394 141.8L394.8 142.7L395.5 140L396.2 141L397 141L397.8 142.1L398.5 142.3L399.2 139.3L400 142.6L400.8 139.6L401.5 143.1L402.2 139.5L403 140.4L403.8 140.7L404.5 141.6L405.2 139.9L406 142.2L406.8 141.4L407.5 141.5L408.2 141.8L409 142.6L409.8 139.9L410.5 141.9L411.2 141.2L412 138.4L412.8 142.9L413.5 139.8L414.2 140.8L415 140.9L415.8 141.7L416.5 141.8L417.2 142L418 140.2L418.8 142.8L419.5 141.6L420.2 140.7L421 141.6L421.8 142.5L422.5 141.7L423.2 142.3L424 141.2L424.8 143L425.5 144.1L426.2 141.1L427 138.8L427.8 144.4L428.5 139.3L429.2 139.5L430 137.9L430.8 142.6L431.5 142.1L432.2 142.1L433 140L433.8 143.3L434.5 140L435.2 140.2L436 141.1L436.8 141L437.5 140.8L438.2 141.4L439 137.3L439.8 144.2L440.5 139L441.2 142.4L442 139.2L442.8 141.7L443.5 140.5L444.2 138.7L445 142.2L445.8 141.6L446.5 139.2L447.2 138.5L448 141L448.8 140L449.5 141.8L450.2 141.1L451 143.8L451.8 141.6L452.5 141L453.2 141.9L454 137.5L454.8 141.6L455.5 140.3L456.2 141.9L457 142.1L457.8 142L458.5 143.2L459.2 140.4L460 142.8L460.8 141.5L461.5 142.2L462.2 142.5L463 141.5L463.8 142.6L464.5 142L465.2 143.8L466 141.6L466.8 142.9L467.5 146L468.2 142.2L469 143.2L469.8 143.7L470.5 140.5L471.2 144L472 143L472.8 142.9L473.5 143.7L474.2 143.2L475 143.9L475.8 140.8L476.5 143.3L477.2 141L478 144.2L478.8 141.4L479.5 140L480.2 142.4L481 139.8L481.8 143.4L482.5 140.2L483.2 138.2L484 141.3L484.8 142.4L485.5 140.9L486.2 139.8L487 141.9L487.8 141.1L488.5 142.6L489.2 141.2L490 140.8L490.8 139.3L491.5 141.5L492.2 141L493 141L493.8 141.9L494.5 139.6L495.2 143.3L496 141.7L496.8 143L497.5 142.3L498.2 142.5L499 143.4L499.8 144L500.5 142.2L501.2 143.6L502 141.5L502.8 143.7L503.5 142.2L504.2 140.5L505 144.3L505.8 139.8L506.5 142.3L507.2 139.2L508 139.2L508.8 142.5L509.5 138.2L510.2 138.3L511 140.9L511.8 138.1L512.5 140.9L513.2 143.1L514 139.2L514.8 141.6L515.5 141.3L516.2 141L517 140.7L517.8 143.4L518.5 140.4L519.2 142.1L520 141.3L520.8 139.6L521.5 142.7L522.2 141.5L523 142.9L523.8 142.6L524.5 144.1L525.2 138.5L526 142.2L526.8 141.2L527.5 140.9L528.2 142.9L529 141.5L529.8 142.2L530.5 139.2L531.2 141L532 141.7L532.8 140.8L533.5 140.7L534.2 141.4L535 140.8L535.8 139.7L536.5 144L537.2 139.1L538 142.4L538.8 141.2L539.5 142L540.2 139.4L541 139.5L541.8 141.5L542.5 140.6L543.2 137L544 137.7L544.8 140.6L545.5 139.9L546.2 140.4L547 141.3L547.8 139.1L548.5 144.8L549.2 140.9L550 142.9L550.8 140.9L551.5 138.2L552.2 142.5L553 140.2L553.8 142.5L554.5 141.1L555.2 142.8L556 140.1L556.8 141.8L557.5 141.9L558.2 140.8L559 141.6L559.8 143L560.5 144.5L561.2 140.9L562 143.5L562.8 139.8L563.5 141.8L564.2 142.3L565 142.4L565.8 139.9L566.5 143L567.2 141.3L568 143.4L568.8 142.1L569.5 141.8L570.2 140.3L571 141.6L571.8 139.5L572.5 140L573.2 138.3L574 139.5L574.8 139.1L575.5 140.9L576.2 140.6L577 138.5L577.8 141L578.5 141L579.2 141.7L580 140L580.8 140.9L581.5 139.7L582.2 142L583 137.6L583.8 141.5L584.5 136.5L585.2 143.9L586 140.4L586.8 136.9L587.5 140.2L588.2 137.9L589 138L589.8 139.9L590.5 138.5L591.2 141.7L592 138.4L592.8 138.4L593.5 139.9L594.2 140.1L595 140.6L595.8 139.9L596.5 137.1L597.2 138.9L598 139.3L598.8 138.2L599.5 140.9L600.2 138.5L601 139.6L601.8 139L602.5 140.1L603.2 137.8L604 144.2L604.8 138.8L605.5 140.6L606.2 139L607 142.5L607.8 140.1L608.5 143.8L609.2 144.4L610 143.8L610.8 142.7L611.5 145.8L612.2 142.9L613 144.1L613.8 143.9L614.5 143.1L615.2 144.6L616 141.6L616.8 141.6L617.5 145.9L618.2 141.6L619 143.3L619.8 143.6L620.5 142.1L621.2 141.3L622 142.8L622.8 141L623.5 143.6L624.2 141.1L625 142L625.8 143.1L626.5 139.1L627.2 140.3L628 143.1L628.8 142.9L629.5 141.1L630.2 140.4L631 143.5L631.8 141.5L632.5 142.9L633.2 138.4L634 142.4L634.8 140L635.5 140.8L636.2 143.2L637 142.8L637.8 141.3L638.5 142.2L639.2 144.5L640 142.8L640.8 142.2L641.5 143.3L642.2 142.4L643 140.7L643.8 142.4L644.5 143.2L645.2 143.6L646 140.9L646.8 142.4L647.5 142.4L648.2 141.2L649 145.5L649.8 143.4L650.5 145.4L651.2 139.7L652 143.4L652.8 146.1L653.5 140.2L654.2 140.8L655 143L655.8 143.6L656.5 141.3L657.2 139L658 141.4L658.8 140.2L659.5 140.3L660.2 140.5L661 141.1L661.8 141.5L662.5 141.7L663.2 141.2L664 139.7L664.8 137.7L665.5 141.9L666.2 137.7L667 144.5L667.8 137.6L668.5 138.8L669.2 138.5L670 142L670.8 140.9L671.5 141.8L672.2 141L673 139.7L673.8 142.5L674.5 139.5L675.2 139.2L676 142.8L676.8 141.2L677.5 139.4L678.2 140.9L679 142.2L679.8 141.6L680.5 138.7L681.2 142.6L682 136.4L682.8 141.7L683.5 140.3L684.2 139.9L685 140.3L685.8 137.6L686.5 140.5L687.2 140.6L688 138.7L688.8 141.4L689.5 140.8L690.2 138.7L691 142.5L691.8 143.7L692.5 140.4" stroke="#000" stroke-width="1.5" fill="none" stroke-linejoin="round"/><path d="M112.5 142V157.6M131.5 142V133M132.5 142V148.5M133.5 142V148M144.5 142V126.5M200.5 142V132M209.5 142V135M250.5 142V150.5M276.5 142V152M289.5 142V126.5M308.5 142V131.6M308.5 142V155.6M319.5 142V152M365.5 142V157M367.5 142V126.5M373.5 142V157.6M382.5 142V149M397.5 142V126.5M399.5 142V126.5M443.5 142V148.5M459.5 142V134.4M487.5 142V126.5M531.5 142V147M537.5 142V126.5M541.5 142V134M552.5 142V129M566.5 142V130M565.5 142V129M570.5 142V131.7M572.5 142V126.5M578.5 142V126.5M584.5 142V126.5M586.5 142V126.5M601.5 142V127.3M607.5 142V152M617.5 142V157.6M618.5 142V157.6M627.5 142V136.1M627.5 142V149.4M658.5 142V133.5" stroke="#222" stroke-width="1" fill="none"/><rect x="79.0" y="509.8" width="613.5" height="3.5" fill="#000"/><rect x="719.2" y="201.8" width="8.2" height="108" fill="url(#cb)"/><path d="M727.6 201.8V309.8M727.6 201.8h5.5M727.6 228.8h5.5M727.6 255.8h5.5M727.6 282.8h5.5M727.6 309.8h5.5" stroke="#000" stroke-width="0.8" fill="none"/><rect x="719.2" y="367.4" width="8.2" height="108" fill="url(#cb)"/><path d="M727.6 367.4V475.4M727.6 367.4h5.5M727.6 394.4h5.5M727.6 421.4h5.5M727.6 448.4h5.5M727.6 475.4h5.5" stroke="#000" stroke-width="0.8" fill="none"/></svg>
<svg width="792" height="612" style="position:absolute;left:0;top:0" font-family="Liberation Serif, serif" fill="#000"><text x="79.5" y="122.8" font-size="12" text-anchor="start" textLength="23.8" lengthAdjust="spacing" >VLF</text><text x="109" y="122.8" font-size="12" text-anchor="start" textLength="38.2" lengthAdjust="spacing" >Spectra</text><text x="251" y="123" font-size="8.8" text-anchor="start" textLength="15.6" lengthAdjust="spacing" >Feb.</text><text x="272.2" y="123" font-size="8.8" text-anchor="start" textLength="12" lengthAdjust="spacing" >14,</text><text x="287.8" y="123" font-size="8.8" text-anchor="start" textLength="19.7" lengthAdjust="spacing" >2023</text><text x="343.8" y="123" font-size="8.8" text-anchor="start" textLength="55" lengthAdjust="spacing" >station=ATH</text><text x="437.8" y="123" font-size="8.8" text-anchor="start" textLength="17.6" lengthAdjust="spacing" >start</text><text x="461.2" y="123" font-size="8.8" text-anchor="start" textLength="12.5" lengthAdjust="spacing" >UT</text><text x="478.8" y="123" font-size="8.8" text-anchor="start" textLength="5.6" lengthAdjust="spacing" >=</text><text x="493.5" y="123" font-size="8.8" text-anchor="start" textLength="10.6" lengthAdjust="spacing" >18:</text><text x="507.4" y="123" font-size="8.8" text-anchor="start" textLength="5.6" lengthAdjust="spacing" >0</text><text x="516.2" y="123" font-size="8.8" text-anchor="start" textLength="2.2" lengthAdjust="spacing" >:</text><text x="523.2" y="123" font-size="8.8" text-anchor="start" textLength="4.6" lengthAdjust="spacing" >1</text><text x="70.6" y="129.6" font-size="9" text-anchor="end" >5</text><text x="70.6" y="160.7" font-size="9" text-anchor="end" >-5</text><text x="70.6" y="325.6" font-size="9" text-anchor="end" >0</text><text x="70.6" y="294.4" font-size="9" text-anchor="end" >2</text><text x="70.6" y="263.1" font-size="9" text-anchor="end" >4</text><text x="70.6" y="231.9" font-size="9" text-anchor="end" >6</text><text x="70.6" y="200.6" font-size="9" text-anchor="end" >8</text><text x="70.6" y="169.4" font-size="9" text-anchor="end" >10</text><text x="70.6" y="491.3" font-size="9" text-anchor="end" >0</text><text x="70.6" y="460.1" font-size="9" text-anchor="end" >2</text><text x="70.6" y="428.9" font-size="9" text-anchor="end" >4</text><text x="70.6" y="397.7" font-size="9" text-anchor="end" >6</text><text x="70.6" y="366.5" font-size="9" text-anchor="end" >8</text><text x="70.6" y="335.3" font-size="9" text-anchor="end" >10</text><text x="70.6" y="500.4" font-size="9" text-anchor="end" >5</text><text x="70.6" y="531.6" font-size="9" text-anchor="end" >-5</text><text x="79.2" y="548" font-size="9" text-anchor="middle" >0</text><text x="141.6" y="548" font-size="9" text-anchor="middle" >1</text><text x="204.1" y="548" font-size="9" text-anchor="middle" >2</text><text x="266.5" y="548" font-size="9" text-anchor="middle" >3</text><text x="329" y="548" font-size="9" text-anchor="middle" >4</text><text x="391.4" y="548" font-size="9" text-anchor="middle" >5</text><text x="453.8" y="548" font-size="9" text-anchor="middle" >6</text><text x="516.3" y="548" font-size="9" text-anchor="middle" >7</text><text x="578.7" y="548" font-size="9" text-anchor="middle" >8</text><text x="641.2" y="548" font-size="9" text-anchor="middle" >9</text><text x="703.6" y="548" font-size="9" text-anchor="middle" >10</text><text x="400" y="558" font-size="9" text-anchor="middle" textLength="48" lengthAdjust="spacing" >Time&#160;&#160;(min)</text><text x="0" y="0" font-size="9" text-anchor="middle" textLength="31.5" lengthAdjust="spacingAndGlyphs" transform="translate(50 142.1) rotate(-90)">ch.1(V)</text><text x="0" y="0" font-size="9" text-anchor="middle" textLength="16.4" lengthAdjust="spacingAndGlyphs" transform="translate(50 244.7) rotate(-90)">ch.1</text><text x="0" y="0" font-size="9" text-anchor="middle" textLength="73" lengthAdjust="spacingAndGlyphs" transform="translate(57.6 233) rotate(-90)">Frequency&#160;&#160;(kHz)</text><text x="0" y="0" font-size="9" text-anchor="middle" textLength="17.4" lengthAdjust="spacingAndGlyphs" transform="translate(50 409.5) rotate(-90)">ch.2</text><text x="0" y="0" font-size="9" text-anchor="middle" textLength="73" lengthAdjust="spacingAndGlyphs" transform="translate(57.6 398.9) rotate(-90)">Frequency&#160;&#160;(kHz)</text><text x="0" y="0" font-size="9" text-anchor="middle" textLength="31.5" lengthAdjust="spacingAndGlyphs" transform="translate(50 513.4) rotate(-90)">ch.3(V)</text><text x="734.5" y="204.8" font-size="8.5" text-anchor="start" >-3</text><text x="734.5" y="231.8" font-size="8.5" text-anchor="start" >-4</text><text x="734.5" y="258.8" font-size="8.5" text-anchor="start" >-5</text><text x="734.5" y="285.8" font-size="8.5" text-anchor="start" >-6</text><text x="734.5" y="312.8" font-size="8.5" text-anchor="start" >-7</text><text x="0" y="0" font-size="7.5" text-anchor="middle" transform="translate(751 259.8) rotate(-90)">log(PSD)(V<tspan font-size="5.5" dy="-3">2</tspan><tspan dy="3">/Hz)</tspan></text><text x="734.5" y="370.4" font-size="8.5" text-anchor="start" >-3</text><text x="734.5" y="397.4" font-size="8.5" text-anchor="start" >-4</text><text x="734.5" y="424.4" font-size="8.5" text-anchor="start" >-5</text><text x="734.5" y="451.4" font-size="8.5" text-anchor="start" >-6</text><text x="734.5" y="478.4" font-size="8.5" text-anchor="start" >-7</text><text x="0" y="0" font-size="7.5" text-anchor="middle" transform="translate(751 425.4) rotate(-90)">log(PSD)(V<tspan font-size="5.5" dy="-3">2</tspan><tspan dy="3">/Hz)</tspan></text></svg>
</body></html>
